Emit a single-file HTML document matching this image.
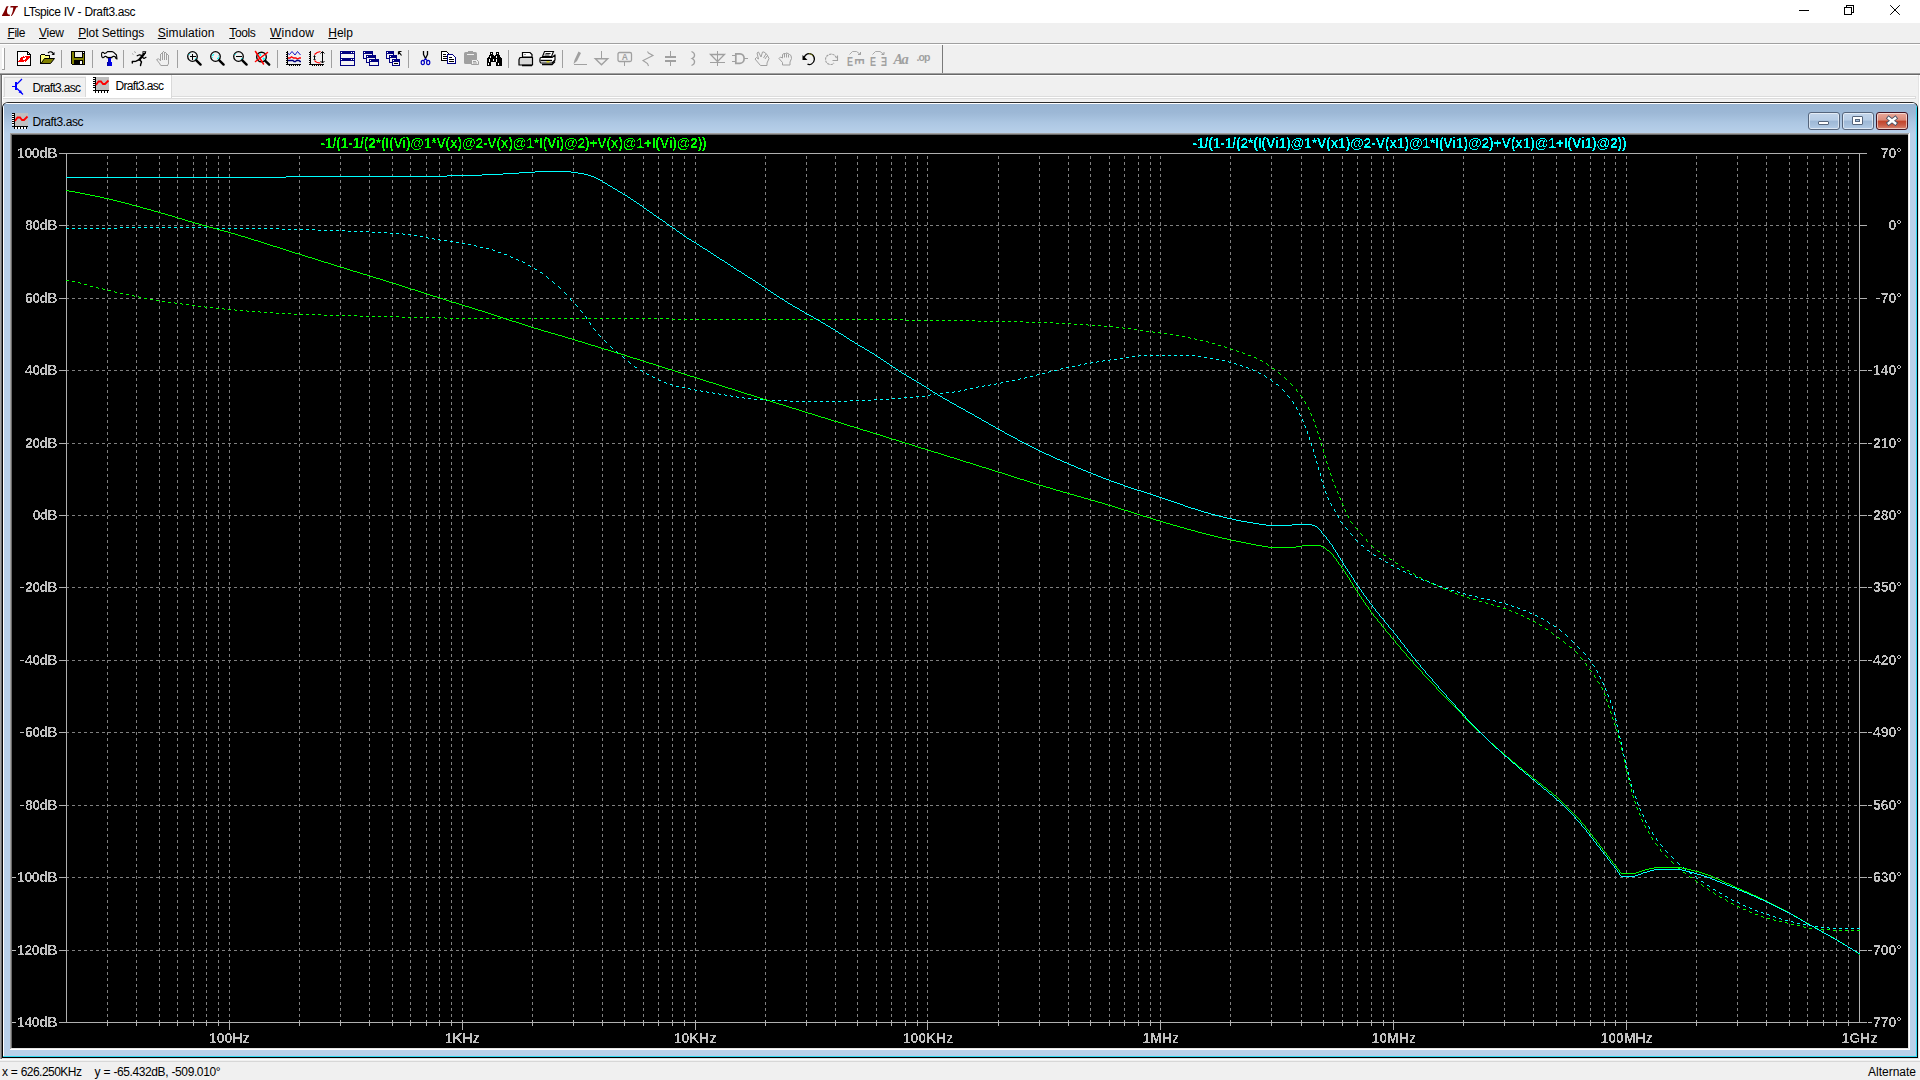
<!DOCTYPE html>
<html lang="en"><head><meta charset="utf-8"><title>LTspice IV - Draft3.asc</title>
<style>
html,body{margin:0;padding:0;width:1920px;height:1080px;overflow:hidden;background:#f0f0f0;}
body{position:relative;font-family:"Liberation Sans",sans-serif;font-size:12px;color:#000;}
.a{position:absolute;}
.t{position:absolute;white-space:pre;}
.t u{text-decoration:underline;text-underline-offset:1px;}
svg{position:absolute;overflow:visible;}
svg text{font-family:"Liberation Sans",sans-serif;font-weight:bold;}
</style></head><body>

<div class="a" style="left:0;top:0;width:1920px;height:23px;background:#fff"></div>
<svg style="left:0;top:0" width="22" height="23" viewBox="0 0 22 23"><path d="M8.600 6L6.300 6.500C5.200 9 4 12.500 2 15.200V16H9.700L10 14.800C8 14.800 7 13.500 7 11.500C7 9.500 7.600 7.600 8.600 6Z" fill="#800000"/><path d="M10.600 6H18L17.600 7.200 16.300 7.500C15 10 14 13.600 11.700 16H10.900C12.400 13 13.100 10 13.300 7.400H10.300Z" fill="#800000"/></svg>
<div class="t" style="left:23.50px;top:4.84px;font-size:12px;line-height:14px;letter-spacing:-0.411px;word-spacing:0.411px;color:#000;">LTspice IV - Draft3.asc</div>
<svg style="left:1780px;top:0" width="140" height="23" viewBox="1780 0 140 23" fill="none" stroke="#000" stroke-width="1" shape-rendering="crispEdges">
<path d="M1799 10.5h10"/>
<path d="M1844.5 7.5h7v7h-7z M1846.5 7.5v-2h7v7h-2"/>
<path d="M1890.200 5.200l9.600 9.600M1899.800 5.200l-9.600 9.600" shape-rendering="auto" stroke-width="1"/>
</svg>
<div class="a" style="left:0;top:23px;width:1920px;height:20px;background:#f0f0f0"></div>
<div class="t" style="left:7.50px;top:25.84px;font-size:12px;line-height:14px;letter-spacing:-0.445px;word-spacing:0.445px;color:#000;"><u>F</u>ile</div>
<div class="t" style="left:39.00px;top:25.84px;font-size:12px;line-height:14px;letter-spacing:-0.264px;word-spacing:0.264px;color:#000;"><u>V</u>iew</div>
<div class="t" style="left:78.20px;top:25.84px;font-size:12px;line-height:14px;letter-spacing:-0.124px;word-spacing:0.124px;color:#000;"><u>P</u>lot Settings</div>
<div class="t" style="left:157.80px;top:25.84px;font-size:12px;line-height:14px;letter-spacing:0.053px;word-spacing:-0.053px;color:#000;"><u>S</u>imulation</div>
<div class="t" style="left:229.30px;top:25.84px;font-size:12px;line-height:14px;letter-spacing:-0.378px;word-spacing:0.378px;color:#000;"><u>T</u>ools</div>
<div class="t" style="left:270.00px;top:25.84px;font-size:12px;line-height:14px;letter-spacing:0.264px;word-spacing:-0.264px;color:#000;"><u>W</u>indow</div>
<div class="t" style="left:328.30px;top:25.84px;font-size:12px;line-height:14px;letter-spacing:-0.060px;word-spacing:0.060px;color:#000;"><u>H</u>elp</div>
<div class="a" style="left:0;top:43px;width:1920px;height:1px;background:#a0a0a0"></div>
<div class="a" style="left:0;top:44px;width:1920px;height:1px;background:#fff"></div>
<div class="a" style="left:0;top:45px;width:1920px;height:28px;background:#f0f0f0"></div>
<div class="a" style="left:2px;top:48px;width:2px;height:21px;background:#fff"></div>
<div class="a" style="left:4px;top:48px;width:1px;height:22px;background:#a0a0a0"></div>
<div class="a" style="left:2px;top:69px;width:3px;height:1px;background:#a0a0a0"></div>
<svg style="left:0;top:45px" width="960" height="28" viewBox="0 45 960 28">
<g transform="translate(16 51)"><path d="M1.5 0.5H11.5L14.5 3.5V14.5H1.5Z" fill="#fff" stroke="#000" shape-rendering="crispEdges"/><path d="M11.5 0.5V3.5H14.5" fill="none" stroke="#000" shape-rendering="crispEdges"/><path d="M7 5h1v1h-1zM9 5h5v1h-5zM5 6h4v1h-4zM10 6h4v1h-4zM4 7h3v1h-3zM10 7h3v1h-3zM3.500 8h3v1h-3zM9 8h3v1h-3zM3 9h8v1h-8zM2 10h6v1h-6zM8.500 10h1v1h-1z" fill="#f00" shape-rendering="crispEdges"/></g>
<g transform="translate(39 51)"><path d="M1.5 12.5V4.5l1-1h3l1 1h4v2" fill="#ffff80" stroke="#000" shape-rendering="crispEdges"/><path d="M2 12.5l3.5-5H15.5l-4 5z" fill="#808000" stroke="#000" stroke-linejoin="round"/><path d="M9 2c2-2 4.500-1.500 5.500 1" fill="none" stroke="#000" stroke-width="1.200"/><path d="M15.5 1v3h-3z" fill="#000"/></g>
<rect x="61" y="50" width="1" height="18" fill="#a0a0a0" shape-rendering="crispEdges"/>
<g transform="translate(70 51)"><path d="M1 0H15V14H2L1 13Z" fill="#000" shape-rendering="crispEdges"/><path d="M2 1h2v12h-2zM13 3h1v10h-1zM4 7h9v1.500h-9z" fill="#808000" shape-rendering="crispEdges"/><rect x="5" y="1" width="7" height="5" fill="#f0f0f0" stroke="#000" stroke-width="1" shape-rendering="crispEdges"/><rect x="5" y="1" width="7" height="5" fill="#f0f0f0" shape-rendering="crispEdges"/><rect x="4" y="9" width="9" height="4" fill="#000" shape-rendering="crispEdges"/><rect x="10" y="10" width="2" height="3" fill="#fff" shape-rendering="crispEdges"/><rect x="13" y="1" width="1" height="1" fill="#fff" shape-rendering="crispEdges"/></g>
<rect x="92" y="50" width="1" height="18" fill="#a0a0a0" shape-rendering="crispEdges"/>
<g transform="translate(101 51)"><defs><linearGradient id="hg" x1="0" y1="0" x2="0" y2="1"><stop offset="0" stop-color="#fff"/><stop offset="0.55" stop-color="#f4f4f4"/><stop offset="1" stop-color="#9a9a9a"/></linearGradient><linearGradient id="hb" x1="0" y1="0" x2="1" y2="0"><stop offset="0" stop-color="#0000a0"/><stop offset="1" stop-color="#0000ff"/></linearGradient></defs><path d="M0.600 3C0.600 1.600 1.600 1.100 2.600 1.600L3.600 2.600 5 2.100 6.500 0.600H11L13 1.600 15.500 4 16 8 15 7.500 14 5.600 12.500 5.200 11 6V6.600H6V6L4.600 5.200 3.600 5.600 2.600 6.600C1.600 7 0.600 6 0.600 4.500Z" fill="url(#hg)" stroke="#000" stroke-width="1.100" stroke-linejoin="round"/><rect x="7" y="7" width="3" height="4" fill="url(#hb)" shape-rendering="crispEdges"/><rect x="6" y="11" width="5" height="4" fill="url(#hb)" shape-rendering="crispEdges"/></g>
<rect x="123" y="50" width="1" height="18" fill="#a0a0a0" shape-rendering="crispEdges"/>
<g transform="translate(131 51)"><path d="M11.500 0.300h3.800l-0.600 2.700h-3.200z" fill="#000"/><rect x="12.400" y="1.100" width="1.200" height="1.100" fill="#fff"/><path d="M13 3L8.500 8.500" stroke="#000" stroke-width="2.300" stroke-linecap="round" fill="none"/><path d="M10.500 4.300L8.500 3.800 6.200 4.800M11.500 6.200L13 7.500 15 6.300" stroke="#000" stroke-width="1.200" fill="none" stroke-linecap="round" stroke-linejoin="round"/><path d="M8.500 8.500L5 10.200 1.300 10.500V12M9 8.800L10.500 11 9.800 13 9.500 14.500" stroke="#000" stroke-width="1.400" fill="none" stroke-linecap="round" stroke-linejoin="round"/><path d="M1 2.500l1.500 1M3 0.500l2 1.200" stroke="#a0a0a0" stroke-width="0.900" fill="none"/></g>
<g transform="translate(155 51)"><path d="M5.500 2.500V9.500M7.500 1V8.500M9.500 1V8.500M11.500 2V8.500M13.500 3.500V12.500M6 2.500h1M8 0.500h1M10 1.500h1M12 3.500h1M5.500 14.500H12.500" fill="none" stroke="#a0a0a0" stroke-width="1" shape-rendering="crispEdges"/><path d="M5.500 9.800L3.500 7.700 1.600 8.600 5 13 5.500 14.500M12.500 14.500L13.500 12.500" fill="none" stroke="#a0a0a0" stroke-width="1" stroke-linejoin="round"/></g>
<rect x="177" y="50" width="1" height="18" fill="#a0a0a0" shape-rendering="crispEdges"/>
<g transform="translate(185 51)"><circle cx="7.5" cy="5.5" r="4.800" fill="#f0f0f0" stroke="#000" stroke-width="1.300"/><path d="M11.300 9.300L15.600 13.600" stroke="#000" stroke-width="2.400" stroke-linecap="round"/><path d="M4.500 5.500h6M7.500 2.500v6" stroke="#000" stroke-width="1.200" shape-rendering="crispEdges"/><path d="M3.700 4l1.300-1.300M10 8.300l1.300-1.300" stroke="#0ff" stroke-width="1"/></g>
<g transform="translate(208 51)"><circle cx="7.5" cy="5.5" r="4.800" fill="#f0f0f0" stroke="#000" stroke-width="1.300"/><path d="M11.300 9.300L15.600 13.600" stroke="#000" stroke-width="2.400" stroke-linecap="round"/><path d="M4.300 4.800l1.700-1.700M9.300 8l1.500-1.500M4.500 6v0.800M10.500 4.500v0.800" stroke="#0ff" stroke-width="1.100"/></g>
<g transform="translate(231 51)"><circle cx="7.5" cy="5.5" r="4.800" fill="#f0f0f0" stroke="#000" stroke-width="1.300"/><path d="M11.300 9.300L15.600 13.600" stroke="#000" stroke-width="2.400" stroke-linecap="round"/><path d="M4.500 5.500h6" stroke="#000" stroke-width="1.200" shape-rendering="crispEdges"/><path d="M3.700 4l1.300-1.300M10 8.300l1.300-1.300" stroke="#0ff" stroke-width="1"/></g>
<g transform="translate(254 51)"><circle cx="7.500" cy="6" r="4.800" fill="#f4f4f4" stroke="#000" stroke-width="1.400"/><path d="M5.500 4.500l1.500-1.200M9 8.500l1.500-1.500" stroke="#0ff" stroke-width="2"/><path d="M11.300 9.800L15.200 13.700" stroke="#000" stroke-width="2.400" stroke-linecap="round"/><path d="M1.500 0.500L9.500 13M13.500 1.500L1.500 10.500" stroke="#f00" stroke-width="1.500" stroke-linecap="round"/></g>
<rect x="277" y="50" width="1" height="18" fill="#a0a0a0" shape-rendering="crispEdges"/>
<g transform="translate(285 51)"><path d="M2.500 0v14M1 13.500h15" stroke="#000" fill="none" shape-rendering="crispEdges"/><path d="M1 1.500h1M1 3.500h1M1 5.500h1M1 7.500h1M1 9.500h1M1 11.500h1M4.500 14v1M6.500 14v1M8.500 14v1M10.500 14v1M12.500 14v1M14.500 14v1" stroke="#000" fill="none" shape-rendering="crispEdges"/><path d="M3 2.500l1.500 1 2.500-3 3 3.500 2.500-3.500 3 3.500" stroke="#0000c0" stroke-width="0.900" fill="none"/><path d="M3 7h2l1.500-1.200 2 1.200h2.500l1.500 1 2-1h1.500" stroke="#f00" stroke-width="1.300" fill="none"/><path d="M3 9.500h5l1 1h1.500l1-1h2.500l1 1h1" stroke="#000080" stroke-width="1.300" fill="none"/></g>
<g transform="translate(308 51)"><path d="M2.500 0v14M1 13.500h15" stroke="#000" fill="none" shape-rendering="crispEdges"/><path d="M1 1.500h1M1 3.500h1M1 5.500h1M1 7.500h1M1 9.500h1M1 11.500h1M4.500 14v1M6.500 14v1M8.500 14v1M10.500 14v1M12.500 14v1M14.500 14v1" stroke="#000" fill="none" shape-rendering="crispEdges"/><path d="M12.500 0.500c-3 0.500-5 2-6 3M6.500 9.500c1 1.500 3 2.500 6 2.500" stroke="#f00" stroke-width="1.200" fill="none"/><path d="M14.500 1v11M12.500 2.500l2-2 2 2M12.500 10l2 2 2-2" stroke="#000" stroke-width="1" fill="none"/><path d="M6.500 5v3.500M5.500 5.500l1-1 1 1M5.500 8l1 1 1-1" stroke="#000" stroke-width="1" fill="none"/></g>
<rect x="331" y="50" width="1" height="18" fill="#a0a0a0" shape-rendering="crispEdges"/>
<g transform="translate(339 51)"><rect x="1.500" y="0.500" width="14" height="14" fill="#f4f4f4" stroke="#000080" shape-rendering="crispEdges"/><rect x="1" y="0" width="15" height="3" fill="#000080" shape-rendering="crispEdges"/><rect x="1" y="7" width="15" height="3" fill="#000080" shape-rendering="crispEdges"/><path d="M2 1.500h1M12 1.500h1M14 1.500h1M2 8.500h1M12 8.500h1M14 8.500h1" stroke="#fff" shape-rendering="crispEdges"/></g>
<g transform="translate(362 51)"><g shape-rendering="crispEdges"><rect x="1.500" y="0.500" width="9" height="7" fill="#f4f4f4" stroke="#000080"/><rect x="1" y="0" width="10" height="3" fill="#000080"/><rect x="4.500" y="4.500" width="9" height="7" fill="#f4f4f4" stroke="#000080"/><rect x="4" y="4" width="10" height="3" fill="#000080"/><rect x="7.500" y="8.500" width="9" height="6" fill="#f4f4f4" stroke="#000080"/><rect x="7" y="8" width="10" height="3" fill="#000080"/><path d="M2 1.500h1M5 5.500h1M8 9.500h1" stroke="#fff"/></g></g>
<g transform="translate(385 51)"><g shape-rendering="crispEdges"><rect x="1.500" y="0.500" width="7" height="7" fill="#f4f4f4" stroke="#000080"/><rect x="1" y="0" width="8" height="3" fill="#000080"/><rect x="4.500" y="4.500" width="7" height="7" fill="#f4f4f4" stroke="#000080"/><rect x="4" y="4" width="8" height="3" fill="#000080"/><rect x="7.500" y="8.500" width="7" height="6" fill="#f4f4f4" stroke="#000080"/><rect x="7" y="8" width="8" height="3" fill="#000080"/><path d="M2 1.500h1M5 5.500h1M8 9.500h1" stroke="#fff"/><path d="M9 12.500h4" stroke="#000"/></g><path d="M13.500 0.500h3M13.500 0.500v3M13.500 0.500l3 4" stroke="#000" stroke-width="1.200" fill="none"/></g>
<rect x="408" y="50" width="1" height="18" fill="#a0a0a0" shape-rendering="crispEdges"/>
<g transform="translate(417 51)"><path d="M6.500 0v3.500l2 4 2-4v-3.500" stroke="#000" stroke-width="1.300" fill="none" stroke-linejoin="round"/><path d="M8.500 7.500l-2 2.500M8.500 7.500l2 2.500" stroke="#0000c0" stroke-width="1.200" fill="none"/><ellipse cx="5.800" cy="11.500" rx="1.600" ry="2.100" fill="none" stroke="#0000c0" stroke-width="1.200"/><ellipse cx="11.200" cy="11.500" rx="1.600" ry="2.100" fill="none" stroke="#0000c0" stroke-width="1.200"/></g>
<g transform="translate(440 51)"><path d="M1.500 0.500H6.500L9.500 3.500V9.500H1.500Z" fill="#fff" stroke="#000" shape-rendering="crispEdges"/><path d="M3 3.500h3M3 5.500h5M3 7.500h5" stroke="#000" shape-rendering="crispEdges"/><path d="M7.500 3.500H12.500L15.500 6.500V12.500H7.500Z" fill="#fff" stroke="#000080" shape-rendering="crispEdges"/><path d="M9 6.500h3M9 8.500h5M9 10.500h5" stroke="#000" shape-rendering="crispEdges"/></g>
<g transform="translate(463 51)"><rect x="1" y="1" width="13" height="12" rx="1.500" fill="#a0a0a0"/><rect x="5" y="0" width="5" height="2" fill="#a0a0a0"/><rect x="4" y="3" width="7" height="1" fill="#f0f0f0"/><path d="M8.500 8.500H13.500L15.500 10.500V13.500H8.500Z" fill="#f0f0f0" stroke="#a0a0a0"/><path d="M10 10.500h3M10 12h4" stroke="#a0a0a0"/></g>
<g transform="translate(487 51)"><g shape-rendering="crispEdges" fill="#000"><rect x="3" y="1" width="3" height="3"/><rect x="9" y="1" width="3" height="3"/><rect x="2" y="4" width="5" height="3"/><rect x="8" y="4" width="5" height="3"/><rect x="1" y="6" width="6" height="9"/><rect x="8" y="6" width="6" height="9"/><rect x="6" y="5" width="3" height="6"/><rect x="14" y="7" width="1" height="8"/><rect x="0" y="7" width="1" height="8"/><rect x="4" y="2" width="1" height="1" fill="#fff"/><rect x="10" y="2" width="1" height="1" fill="#fff"/><rect x="3" y="5" width="1" height="2" fill="#fff"/><rect x="9" y="5" width="1" height="2" fill="#fff"/><rect x="2" y="8" width="1" height="3" fill="#fff"/><rect x="9" y="8" width="1" height="3" fill="#fff"/><rect x="1" y="12" width="1" height="2" fill="#fff"/><rect x="11" y="12" width="1" height="2" fill="#fff"/><rect x="4" y="11" width="5" height="4" fill="#f0f0f0"/><rect x="6" y="8" width="1" height="2" fill="#fff"/></g></g>
<rect x="508" y="50" width="1" height="18" fill="#a0a0a0" shape-rendering="crispEdges"/>
<g transform="translate(517 51)"><path d="M5.500 1.500h7.500l2 2v2.500h-9.500z" fill="#fff" stroke="#000" stroke-width="1.200"/><path d="M7 3l1 1 1-1" stroke="#a0a0a0" fill="none"/><path d="M3 6.500h12.500v7.500h-13.500v-5.500z" fill="#d8d8d8" stroke="#000" stroke-width="1.200" stroke-linejoin="round"/><path d="M5 14.500h10" stroke="#000" stroke-width="1.500"/></g>
<g transform="translate(539 51)"><path d="M5.500 0.500h9l-2 5h-9z" fill="#fff" stroke="#000" stroke-width="1.100"/><path d="M6.500 2.500h5M5.500 4h5" stroke="#000" stroke-width="0.900"/><path d="M2 6.500h11l3-2.500v5l-3 3h-11c-1.500 0-1.500-5.500 0-5.500z" fill="#fff" stroke="#000" stroke-width="1.200" stroke-linejoin="round"/><path d="M1.500 9.500h11.500" stroke="#000" stroke-width="1.400"/><path d="M7.500 10.800h3" stroke="#e8e000" stroke-width="1.200"/><path d="M3 13.500h10l3-3" stroke="#000" stroke-width="1.400" fill="none"/></g>
<rect x="562" y="50" width="1" height="18" fill="#a0a0a0" shape-rendering="crispEdges"/>
<g transform="translate(572 51)"><path d="M2 13.500h13" stroke="#a0a0a0" fill="none" shape-rendering="crispEdges"/><path d="M1.500 13l1-4 4-8.500 2.500 1.500-4 8z" fill="#a0a0a0"/></g>
<g transform="translate(593 51)"><path d="M8.500 0v7.500" stroke="#a0a0a0" fill="none" shape-rendering="crispEdges"/><path d="M2.300 7.800h12.400l-6.200 6z" fill="none" stroke="#a0a0a0" stroke-width="1.400"/></g>
<g transform="translate(617 51)"><rect x="1" y="1.500" width="13.500" height="9" rx="1.500" fill="none" stroke="#a0a0a0" stroke-width="1.300"/><path d="M7.500 10.500v4.500" stroke="#a0a0a0" shape-rendering="crispEdges"/><text x="7.800" y="9.300" font-size="8.500" text-anchor="middle" fill="#a0a0a0" style="font-family:'Liberation Sans',sans-serif;font-weight:bold">A</text></g>
<g transform="translate(640 51)"><path d="M7.500 0.500l1 1.500 4.500 2.500-10 5 4.500 3 1 2.500" fill="none" stroke="#a0a0a0" stroke-width="1.100" stroke-linejoin="miter"/></g>
<g transform="translate(662 51)"><path d="M8.500 0v5M8.500 10v5" stroke="#a0a0a0" fill="none" shape-rendering="crispEdges"/><path d="M3 5h11v2h-11zM3 9h11v2h-11z" fill="#a0a0a0" shape-rendering="crispEdges"/></g>
<g transform="translate(685 51)"><path d="M6.500 0.500c4 1.500 4 5.500 0.500 7c3.500 1.500 3.500 5.500-0.500 7" fill="none" stroke="#a0a0a0" stroke-width="1.300"/></g>
<g transform="translate(708 51)"><path d="M9.500 0v15" stroke="#a0a0a0" fill="none" shape-rendering="crispEdges"/><path d="M2.500 3.500h14l-7 7z" fill="none" stroke="#a0a0a0" stroke-width="1.300"/><path d="M2 11.500h15" stroke="#a0a0a0" fill="none" shape-rendering="crispEdges"/></g>
<g transform="translate(731 51)"><path d="M1 4.500h3.500M1 10.500h3.500M13 7.500h3.500" stroke="#a0a0a0" fill="none" shape-rendering="crispEdges"/><path d="M4.800 2.800h4.200c5.500 0 5.500 9.500 0 9.500h-4.200z" fill="none" stroke="#a0a0a0" stroke-width="1.700"/></g>
<g transform="translate(754 51)"><path d="M6.500 14.500l-5.500-6.500 1.500-1.500 2 1.500-1.500-6 1.500-1 2.500 5 1.500-5 1.500 0 3 2.500 2 4-2 4.500v2.500z" fill="none" stroke="#a0a0a0" stroke-width="1" stroke-linejoin="round"/><path d="M9.500 7l2.500-4M11 8l2-3" stroke="#a0a0a0" fill="none"/></g>
<g transform="translate(777 51)"><path d="M5.500 14v-2.500l-3.500-4 1.500-1.500 2 1v-3.500l1.500-1h1.500l1-0.500 1.500 0.500 1.500 1 1.500 1 0.500 3-1.500 3.500v3z" fill="none" stroke="#a0a0a0" stroke-width="1" stroke-linejoin="round"/><path d="M7.500 3v3.500M9.500 2.500v4M11.500 3.500v3" stroke="#a0a0a0" fill="none"/></g>
<g transform="translate(800 51)"><path d="M4 6.500c1.500-3.500 5-5 8-3c3.500 2.500 3 7.500-0.500 9.500c-1.500 0.800-3 0.800-4 0" fill="none" stroke="#000" stroke-width="1.300"/><path d="M2.500 4v5h5z" fill="#000"/><path d="M9 2.600c1.500 0 3 1 4 2.500" stroke="#808000" stroke-width="0.800" fill="none"/></g>
<g transform="translate(824 51)"><path d="M12.500 7c-1.500-4-6-5-9-2.500c-3 2.500-2.500 7 1 8.500c2 1 4 0.500 5.500-1" fill="none" stroke="#a0a0a0" stroke-width="1.100" stroke-dasharray="2.500 0.800"/><path d="M13.500 4.500v5h-5" fill="none" stroke="#a0a0a0" stroke-width="1.100"/></g>
<g transform="translate(846 51)"><path d="M3.500 3.500l3-3h4l4 3" fill="none" stroke="#a0a0a0" stroke-width="0.900"/><path d="M12 3.500h2.500v-2.500" fill="none" stroke="#a0a0a0"/><text x="1" y="15" font-size="12.500" fill="#a0a0a0" style="font-family:'Liberation Sans',sans-serif;font-weight:bold" textLength="6" lengthAdjust="spacingAndGlyphs">E</text><text transform="translate(8.500 7.600) rotate(90) scale(0.720 1)" x="0" y="0" font-size="12.500" fill="#a0a0a0" style="font-family:'Liberation Sans',sans-serif;font-weight:bold">E</text></g>
<g transform="translate(869 51)"><path d="M3.500 3.500l3-3h4.500l4 3" fill="none" stroke="#a0a0a0" stroke-width="0.900"/><path d="M12.500 3.500h2.500v-2.500" fill="none" stroke="#a0a0a0"/><text x="1" y="15" font-size="12.500" fill="#a0a0a0" style="font-family:'Liberation Sans',sans-serif;font-weight:bold" textLength="6" lengthAdjust="spacingAndGlyphs">E</text><text transform="translate(18 15) scale(-0.720 1)" x="0" y="0" font-size="12.500" fill="#a0a0a0" style="font-family:'Liberation Sans',sans-serif;font-weight:bold">E</text></g>
<text x="893.500" y="64" font-size="14.500" fill="#a0a0a0" style="font-family:'Liberation Serif',serif;font-style:italic;font-weight:bold" letter-spacing="-1.600">Aa</text>
<text x="916.500" y="60.500" font-size="10.500" fill="#a0a0a0" style="font-family:'Liberation Sans',sans-serif;font-weight:bold" letter-spacing="-0.900">.op</text>
<rect x="942" y="45" width="1" height="29" fill="#7a7a7a" shape-rendering="crispEdges"/>
</svg>
<div class="a" style="left:0;top:73px;width:1920px;height:1px;background:#a0a0a0"></div>
<div class="a" style="left:0;top:74px;width:1920px;height:1px;background:#696969"></div>
<div class="a" style="left:2px;top:75px;width:1916px;height:27px;background:#f0f0f0"></div>
<div class="a" style="left:2px;top:75px;width:1916px;height:1px;background:#fff"></div>
<div class="a" style="left:2px;top:75px;width:1px;height:27px;background:#fff"></div>
<div class="a" style="left:3px;top:96px;width:1913px;height:3px;box-sizing:border-box;background:#fff;border:1px solid #dcdcdc;border-left:0"></div>
<div class="a" style="left:4px;top:77px;width:82px;height:20px;box-sizing:border-box;background:#f0f0f0;border:1px solid #d9d9d9;border-bottom:0"></div>
<div class="a" style="left:86px;top:75px;width:86px;height:23px;box-sizing:border-box;background:#fff;border-right:1px solid #d9d9d9"></div>
<svg style="left:11px;top:78px" width="14" height="18" viewBox="0 0 14 18"><path d="M4 4h2v8h-2z" fill="#00f" shape-rendering="crispEdges"/><path d="M1 8.500h4" stroke="#00f" stroke-width="1" shape-rendering="crispEdges"/><path d="M6 6l5-5M6 10.500l6 6" stroke="#00f" stroke-width="1.200" fill="none"/><path d="M11 15.500l-3.500-1 2.500-2.500z" fill="#00f"/></svg>
<div class="t" style="left:32.50px;top:80.84px;font-size:12px;line-height:14px;letter-spacing:-0.687px;word-spacing:0.687px;color:#000;">Draft3.asc</div>
<svg style="left:93px;top:77px" width="16" height="16" viewBox="0 0 16 16" shape-rendering="crispEdges"><rect x="3" y="0" width="13" height="13" fill="#c0c0c0"/><path d="M0 1.5h2M0 3.5h2M0 5.5h2M0 7.5h2M0 9.5h2M0 11.5h2" stroke="#fff" stroke-width="1" fill="none"/><path d="M3 15h2M6 15h2M9 15h2M12 15h2" stroke="#fff" stroke-width="2" fill="none"/><path d="M2.5 0v14M0 13.5h16" stroke="#000" stroke-width="1" fill="none"/><path d="M0 0.5h2M0 2.5h2M0 4.5h2M0 6.5h2M0 8.5h2M0 10.5h2M2.5 14v2M5.5 14v2M8.5 14v2M11.5 14v2M14.5 14v2" stroke="#000" stroke-width="1" fill="none"/><path d="M3 8L5.500 4.500h2.500l2 2.500h2l3.500-3.500" stroke="#f00" stroke-width="1.800" fill="none" shape-rendering="auto"/></svg>
<div class="t" style="left:115.50px;top:78.84px;font-size:12px;line-height:14px;letter-spacing:-0.687px;word-spacing:0.687px;color:#000;">Draft3.asc</div>
<div class="a" style="left:0;top:75px;width:1px;height:985px;background:#a0a0a0"></div>
<div class="a" style="left:1px;top:75px;width:1px;height:984px;background:#696969"></div>
<div class="a" style="left:1918px;top:75px;width:1px;height:984px;background:#e3e3e3"></div>
<div class="a" style="left:1919px;top:75px;width:1px;height:985px;background:#fff"></div>
<div class="a" style="left:2px;top:1058px;width:1916px;height:1px;background:#e3e3e3"></div>
<div class="a" style="left:0;top:1059px;width:1920px;height:1px;background:#fff"></div>
<div class="a" style="left:2px;top:102px;width:1916px;height:956px;box-sizing:border-box;border:1px solid #000;border-top-color:#2b2b2b;border-radius:6px 6px 0 0;background:#b9d1ea;overflow:hidden"><div class="a" style="left:0;top:0;width:1914px;height:31px;background:linear-gradient(#98b4d2 0px,#9db8d6 10px,#adc7e3 20px,#b9d1ea 31px)"></div><div class="a" style="left:0;top:0;width:1914px;height:1px;background:#fff;border-radius:5px 5px 0 0"></div><div class="a" style="left:0;top:0;width:1px;height:954px;background:#fff"></div><div class="a" style="left:1913px;top:2px;width:1px;height:952px;background:#2fd8f0"></div><div class="a" style="left:0;top:953px;width:1914px;height:1px;background:#2fd8f0"></div></div>
<div class="a" style="left:10px;top:133px;width:1900px;height:917px;background:#fff"></div>
<div class="a" style="left:10px;top:133px;width:1899px;height:916px;background:#a0a0a0"></div>
<div class="a" style="left:11px;top:134px;width:1898px;height:915px;background:#e3e3e3"></div>
<div class="a" style="left:11px;top:134px;width:1897px;height:914px;background:#696969"></div>
<div class="a" style="left:12px;top:135px;width:1896px;height:913px;background:#000"></div>
<svg style="left:12px;top:113px" width="16" height="16" viewBox="0 0 16 16" shape-rendering="crispEdges"><rect x="3" y="0" width="13" height="13" fill="#c0c0c0"/><path d="M0 1.5h2M0 3.5h2M0 5.5h2M0 7.5h2M0 9.5h2M0 11.5h2" stroke="#fff" stroke-width="1" fill="none"/><path d="M3 15h2M6 15h2M9 15h2M12 15h2" stroke="#fff" stroke-width="2" fill="none"/><path d="M2.5 0v14M0 13.5h16" stroke="#000" stroke-width="1" fill="none"/><path d="M0 0.5h2M0 2.5h2M0 4.5h2M0 6.5h2M0 8.5h2M0 10.5h2M2.5 14v2M5.5 14v2M8.5 14v2M11.5 14v2M14.5 14v2" stroke="#000" stroke-width="1" fill="none"/><path d="M3 8L5.500 4.500h2.500l2 2.500h2l3.500-3.500" stroke="#f00" stroke-width="1.800" fill="none" shape-rendering="auto"/></svg>
<div class="a" style="left:1808px;top:112px;width:32px;height:18px;box-sizing:border-box;border:1px solid #55657c;border-radius:3px;background:linear-gradient(#c3d5ea 0%,#b7cde6 45%,#9db8d6 50%,#a6c0dc 75%,#b4cde8 100%);box-shadow:inset 0 0 0 1px rgba(255,255,255,.55)"></div>
<div class="a" style="left:1842px;top:112px;width:32px;height:18px;box-sizing:border-box;border:1px solid #55657c;border-radius:3px;background:linear-gradient(#c3d5ea 0%,#b7cde6 45%,#9db8d6 50%,#a6c0dc 75%,#b4cde8 100%);box-shadow:inset 0 0 0 1px rgba(255,255,255,.55)"></div>
<div class="a" style="left:1876px;top:112px;width:32px;height:18px;box-sizing:border-box;border:1px solid #431422;border-radius:3px;background:linear-gradient(#e9a99b 0%,#dc8a79 45%,#c1432a 50%,#c85a45 75%,#d98873 100%);box-shadow:inset 0 0 0 1px rgba(255,255,255,.55)"></div>
<svg style="left:1800px;top:110px" width="112" height="22" viewBox="1800 110 112 22"><rect x="1818.500" y="121.500" width="10" height="3" rx="0.500" fill="#fff" stroke="#55657c" stroke-width="1"/><rect x="1852.500" y="116.500" width="10" height="8" rx="0.500" fill="#fff" stroke="#55657c" stroke-width="1"/><rect x="1855.500" y="119.500" width="4" height="2" fill="#a6c0dc" stroke="#55657c" stroke-width="1"/><path d="M1888.800 118.200l6.400 5M1895.200 118.200l-6.400 5" stroke="#4a5568" stroke-width="4.200" stroke-linecap="square"/><path d="M1888.800 118.200l6.400 5M1895.200 118.200l-6.400 5" stroke="#fff" stroke-width="2.400" stroke-linecap="square"/></svg>
<div class="t" style="left:32.50px;top:115.24px;font-size:12px;line-height:14px;letter-spacing:-0.409px;word-spacing:0.409px;color:#000;">Draft3.asc</div>
<svg style="left:12px;top:135px" width="1896" height="913" viewBox="12 135 1896 913">
<g shape-rendering="crispEdges" fill="none" stroke-width="1">
<path d="M107.5 156V1020 M136.5 156V1020 M159.5 156V1020 M177.5 156V1020 M193.5 156V1020 M206.5 156V1020 M218.5 156V1020 M229.5 156V1020 M299.5 156V1020 M340.5 156V1020 M369.5 156V1020 M392.5 156V1020 M410.5 156V1020 M426.5 156V1020 M439.5 156V1020 M451.5 156V1020 M462.5 156V1020 M532.5 156V1020 M573.5 156V1020 M602.5 156V1020 M624.5 156V1020 M643.5 156V1020 M658.5 156V1020 M672.5 156V1020 M684.5 156V1020 M695.5 156V1020 M765.5 156V1020 M806.5 156V1020 M835.5 156V1020 M857.5 156V1020 M876.5 156V1020 M891.5 156V1020 M905.5 156V1020 M917.5 156V1020 M927.5 156V1020 M998.5 156V1020 M1039.5 156V1020 M1068.5 156V1020 M1090.5 156V1020 M1109.5 156V1020 M1124.5 156V1020 M1138.5 156V1020 M1150.5 156V1020 M1160.5 156V1020 M1230.5 156V1020 M1271.5 156V1020 M1301.5 156V1020 M1323.5 156V1020 M1342.5 156V1020 M1357.5 156V1020 M1371.5 156V1020 M1383.5 156V1020 M1393.5 156V1020 M1463.5 156V1020 M1504.5 156V1020 M1533.5 156V1020 M1556.5 156V1020 M1574.5 156V1020 M1590.5 156V1020 M1604.5 156V1020 M1615.5 156V1020 M1626.5 156V1020 M1696.5 156V1020 M1737.5 156V1020 M1766.5 156V1020 M1789.5 156V1020 M1807.5 156V1020 M1823.5 156V1020 M1836.5 156V1020 M1848.5 156V1020" stroke="#808080" stroke-dasharray="3 3"/>
<path d="M66 225.5H1859 M66 298.5H1859 M66 370.5H1859 M66 443.5H1859 M66 515.5H1859 M66 587.5H1859 M66 660.5H1859 M66 732.5H1859 M66 805.5H1859 M66 877.5H1859 M66 950.5H1859" stroke="#808080" stroke-dasharray="3 3"/>
<path d="M59 153.5H1867 M59 1022.5H1867 M66.5 153.5V1023.0 M1859.5 153.5V1023.0 M59 225.5H66 M1860 225.5H1867 M59 298.5H66 M1860 298.5H1867 M59 370.5H66 M1860 370.5H1867 M59 443.5H66 M1860 443.5H1867 M59 515.5H66 M1860 515.5H1867 M59 587.5H66 M1860 587.5H1867 M59 660.5H66 M1860 660.5H1867 M59 732.5H66 M1860 732.5H1867 M59 805.5H66 M1860 805.5H1867 M59 877.5H66 M1860 877.5H1867 M59 950.5H66 M1860 950.5H1867 M107.5 1020V1026 M136.5 1020V1026 M159.5 1020V1026 M177.5 1020V1026 M193.5 1020V1026 M206.5 1020V1026 M218.5 1020V1026 M229.5 1020V1030 M299.5 1020V1026 M340.5 1020V1026 M369.5 1020V1026 M392.5 1020V1026 M410.5 1020V1026 M426.5 1020V1026 M439.5 1020V1026 M451.5 1020V1026 M462.5 1020V1030 M532.5 1020V1026 M573.5 1020V1026 M602.5 1020V1026 M624.5 1020V1026 M643.5 1020V1026 M658.5 1020V1026 M672.5 1020V1026 M684.5 1020V1026 M695.5 1020V1030 M765.5 1020V1026 M806.5 1020V1026 M835.5 1020V1026 M857.5 1020V1026 M876.5 1020V1026 M891.5 1020V1026 M905.5 1020V1026 M917.5 1020V1026 M927.5 1020V1030 M998.5 1020V1026 M1039.5 1020V1026 M1068.5 1020V1026 M1090.5 1020V1026 M1109.5 1020V1026 M1124.5 1020V1026 M1138.5 1020V1026 M1150.5 1020V1026 M1160.5 1020V1030 M1230.5 1020V1026 M1271.5 1020V1026 M1301.5 1020V1026 M1323.5 1020V1026 M1342.5 1020V1026 M1357.5 1020V1026 M1371.5 1020V1026 M1383.5 1020V1026 M1393.5 1020V1030 M1463.5 1020V1026 M1504.5 1020V1026 M1533.5 1020V1026 M1556.5 1020V1026 M1574.5 1020V1026 M1590.5 1020V1026 M1604.5 1020V1026 M1615.5 1020V1026 M1626.5 1020V1030 M1696.5 1020V1026 M1737.5 1020V1026 M1766.5 1020V1026 M1789.5 1020V1026 M1807.5 1020V1026 M1823.5 1020V1026 M1836.5 1020V1026 M1848.5 1020V1026" stroke="#b0b0b0"/>
<path d="M66 280.5h3M72 281.5h3M78 282.5h2M80 283.5h1M84 284.5h3M90 286.5h3M96 287.5h2M98 288.5h1M102 288.5h1M103 289.5h2M108 290.5h3M114 291.5h1M115 292.5h2M120 293.5h3M126 294.5h3M132 295.5h2M134 296.5h1M138 296.5h1M139 297.5h2M144 298.5h3M150 299.5h3M156 300.5h3M162 301.5h3M168 302.5h3M174 302.5h1M175 303.5h2M180 303.5h2M182 304.5h1M186 304.5h3M192 305.5h3M198 306.5h3M204 306.5h1M205 307.5h2M210 307.5h3M216 308.5h3M222 308.5h2M224 309.5h1M228 309.5h3M234 309.5h1M235 310.5h2M240 310.5h3M246 310.5h1M247 311.5h2M252 311.5h3M258 311.5h2M260 312.5h1M264 312.5h3M270 312.5h3M276 313.5h3M282 313.5h3M288 313.5h3M294 314.5h3M300 314.5h3M306 314.5h3M312 314.5h3M318 314.5h3M324 315.5h3M330 315.5h3M336 315.5h3M342 315.5h3M348 315.5h3M354 315.5h3M360 316.5h3M366 316.5h3M372 316.5h3M378 316.5h3M384 316.5h3M390 316.5h3M396 316.5h3M402 317.5h3M408 317.5h3M414 317.5h3M420 317.5h3M426 317.5h3M432 317.5h3M438 317.5h3M444 317.5h1M445 318.5h2M450 318.5h3M456 318.5h3M462 318.5h3M468 318.5h3M474 318.5h3M480 318.5h3M486 318.5h3M492 318.5h3M498 318.5h3M504 318.5h3M510 318.5h3M516 318.5h3M522 318.5h3M528 318.5h3M534 318.5h3M540 318.5h3M546 318.5h3M552 318.5h3M558 318.5h3M564 318.5h3M570 318.5h3M576 318.5h3M582 318.5h3M588 318.5h3M594 318.5h3M600 318.5h3M606 318.5h3M612 318.5h3M618 318.5h3M624 318.5h3M630 318.5h3M636 318.5h3M642 318.5h3M648 318.5h3M654 318.5h3M660 318.5h3M666 318.5h3M672 319.5h3M678 319.5h3M684 319.5h3M690 319.5h3M696 319.5h3M702 319.5h3M708 319.5h3M714 319.5h3M720 319.5h3M726 319.5h3M732 319.5h3M738 319.5h3M744 319.5h3M750 319.5h3M756 319.5h3M762 319.5h3M768 319.5h3M774 319.5h3M780 319.5h3M786 319.5h3M792 319.5h3M798 319.5h3M804 319.5h3M810 319.5h3M816 319.5h3M822 319.5h3M828 319.5h3M834 319.5h3M840 319.5h3M846 319.5h3M852 319.5h3M858 319.5h3M864 319.5h3M870 319.5h3M876 319.5h3M882 319.5h3M888 319.5h3M894 319.5h3M900 319.5h3M906 320.5h3M912 320.5h3M918 320.5h3M924 320.5h3M930 320.5h3M936 320.5h3M942 320.5h3M948 320.5h3M954 320.5h3M960 320.5h3M966 320.5h3M972 320.5h3M978 321.5h3M984 321.5h3M990 321.5h3M996 321.5h3M1002 321.5h3M1008 321.5h3M1014 321.5h3M1020 321.5h3M1026 322.5h3M1032 322.5h3M1038 322.5h3M1044 322.5h3M1050 322.5h3M1056 323.5h3M1062 323.5h3M1068 323.5h3M1074 324.5h3M1080 324.5h3M1086 324.5h2M1088 325.5h1M1092 325.5h3M1098 325.5h3M1104 326.5h3M1110 326.5h3M1116 327.5h3M1122 327.5h1M1123 328.5h2M1128 328.5h3M1134 329.5h3M1140 330.5h3M1146 331.5h3M1152 331.5h1M1153 332.5h2M1158 332.5h2M1160 333.5h1M1164 333.5h3M1170 334.5h3M1176 335.5h3M1182 336.5h3M1188 337.5h2M1190 338.5h1M1194 338.5h1M1195 339.5h2M1200 340.5h3M1206 341.5h2M1208 342.5h1M1212 343.5h3M1218 345.5h3M1224 346.5h1M1225 347.5h2M1230 348.5h1M1231 349.5h2M1236 350.5h1M1237 351.5h2M1242 352.5h1M1243 353.5h2M1248 355.5h3M1254 357.5h2M1256 358.5h1M1260 360.5h2M1262 361.5h1M1266 363.5h1M1267 364.5h1M1268 365.5h1M1272 368.5h2M1274 369.5h1M1278 372.5h1M1279 373.5h1M1280 374.5h1M1284 377.5h1M1285 378.5h1M1286 379.5h1M1290 383.5h1M1291 384.5h1M1292 385.5h1M1296.5 389v2M1297 391.5h1M1300 395.5h1M1301 396.5h1M1302 397.5h1M1304 401.5h1M1305.5 402v2M1308.5 407v2M1309 409.5h1M1310 413.5h1M1311.5 414v2M1313.5 419v2M1314 421.5h1M1315.5 425v2M1316 427.5h1M1317.5 431v2M1318 433.5h1M1319.5 437v2M1320 439.5h1M1321.5 443v3M1323.5 449v3M1324 455.5h1M1325.5 456v2M1326.5 461v2M1327 463.5h1M1328.5 467v2M1329 469.5h1M1330.5 473v2M1331 475.5h1M1332.5 479v2M1333 481.5h1M1334 485.5h1M1335.5 486v2M1337.5 491v2M1338 493.5h1M1339 497.5h1M1340.5 498v2M1342.5 503v2M1343 505.5h1M1344 509.5h1M1345.5 510v2M1347 515.5h1M1348.5 516v2M1350 521.5h1M1351 522.5h1M1352 523.5h1M1355 527.5h1M1356 528.5h1M1357 529.5h1M1360 533.5h1M1361 534.5h1M1362 535.5h1M1366.5 539v2M1367 541.5h1M1371 545.5h1M1372 546.5h1M1373 547.5h1M1377 550.5h1M1378 551.5h2M1383 554.5h1M1384 555.5h2M1389 558.5h1M1390 559.5h2M1395 562.5h1M1396 563.5h2M1401 566.5h1M1402 567.5h2M1407 570.5h2M1409 571.5h1M1413 573.5h1M1414 574.5h1M1415 575.5h1M1419 577.5h2M1421 578.5h1M1425 580.5h2M1427 581.5h1M1431 583.5h2M1433 584.5h1M1437 585.5h1M1438 586.5h2M1443 588.5h2M1445 589.5h1M1449 590.5h1M1450 591.5h2M1455 593.5h2M1457 594.5h1M1461 595.5h2M1463 596.5h1M1467 597.5h2M1469 598.5h1M1473 599.5h3M1479 601.5h3M1485 602.5h1M1486 603.5h2M1491 604.5h2M1493 605.5h1M1497 606.5h3M1503 608.5h3M1509 610.5h2M1511 611.5h1M1515 612.5h1M1516 613.5h2M1521 615.5h2M1523 616.5h1M1527 618.5h2M1529 619.5h1M1533 621.5h2M1535 622.5h1M1539 624.5h1M1540 625.5h2M1545 628.5h1M1546 629.5h2M1551 632.5h1M1552 633.5h1M1553 634.5h1M1557 637.5h2M1559 638.5h1M1563 641.5h1M1564 642.5h1M1565 643.5h1M1569 646.5h1M1570 647.5h2M1575 651.5h1M1576 652.5h1M1577 653.5h1M1580 657.5h1M1581 658.5h1M1582 659.5h1M1585 663.5h1M1586.5 664v2M1589 669.5h1M1590 670.5h1M1591 671.5h1M1594.5 675v2M1595 677.5h1M1597 681.5h1M1598 682.5h1M1599 683.5h1M1601 687.5h1M1602.5 688v2M1604.5 693v2M1605 695.5h1M1606.5 699v2M1607 701.5h1M1608.5 705v2M1609 707.5h1M1610.5 711v2M1611 713.5h1M1612.5 717v2M1613 719.5h1M1614.5 723v2M1615 725.5h1M1616.5 729v2M1617 731.5h1M1618.5 735v3M1619 741.5h1M1620.5 742v2M1621.5 747v3M1622 753.5h1M1623.5 754v2M1624.5 759v3M1625.5 765v3M1626 771.5h1M1627.5 772v2M1628.5 777v3M1629 783.5h1M1630.5 784v2M1631.5 789v3M1632 795.5h1M1633.5 796v2M1634 801.5h1M1635.5 802v2M1636 807.5h1M1637.5 808v2M1639.5 813v2M1640 815.5h1M1641 819.5h1M1642.5 820v2M1644 825.5h1M1645.5 826v2M1648.5 831v2M1649 833.5h1M1651 837.5h1M1652.5 838v2M1655 843.5h1M1656 844.5h1M1657 845.5h1M1660.5 849v2M1661 851.5h1M1665 855.5h1M1666 856.5h1M1667 857.5h1M1671 861.5h1M1672 862.5h1M1673 863.5h1M1677 867.5h1M1678 868.5h2M1683 872.5h2M1685 873.5h1M1689 876.5h1M1690 877.5h2M1695 880.5h1M1696 881.5h1M1697 882.5h1M1701 884.5h1M1702 885.5h1M1703 886.5h1M1707 888.5h1M1708 889.5h1M1709 890.5h1M1713 892.5h1M1714 893.5h1M1715 894.5h1M1719 896.5h1M1720 897.5h2M1725 899.5h1M1726 900.5h1M1727 901.5h1M1731 903.5h2M1733 904.5h1M1737 906.5h2M1739 907.5h1M1743 909.5h3M1749 911.5h1M1750 912.5h2M1755 914.5h3M1761 916.5h2M1763 917.5h1M1767 918.5h3M1773 919.5h1M1774 920.5h2M1779 921.5h3M1785 922.5h2M1787 923.5h1M1791 924.5h3M1797 925.5h3M1803 926.5h1M1804 927.5h2M1809 928.5h3M1815 928.5h3M1821 929.5h3M1827 929.5h3M1833 930.5h3M1839 930.5h3M1845 930.5h3M1851 930.5h3M1857 930.5h3" stroke="#00ff00"/>
<path d="M66 228.5h3M72 228.5h3M78 228.5h3M84 228.5h3M90 228.5h3M96 228.5h3M102 228.5h3M108 228.5h3M114 228.5h3M120 227.5h3M126 227.5h3M132 227.5h3M138 227.5h3M144 227.5h3M150 227.5h3M156 227.5h3M162 227.5h3M168 227.5h3M174 227.5h3M180 227.5h3M186 227.5h3M192 227.5h3M198 227.5h3M204 227.5h3M210 227.5h3M216 228.5h3M222 228.5h3M228 228.5h3M234 228.5h3M240 228.5h3M246 228.5h3M252 228.5h3M258 228.5h3M264 228.5h3M270 228.5h3M276 228.5h3M282 229.5h3M288 229.5h3M294 229.5h3M300 229.5h3M306 229.5h3M312 229.5h3M318 230.5h3M324 230.5h3M330 230.5h3M336 230.5h3M342 230.5h3M348 231.5h3M354 231.5h3M360 231.5h3M366 231.5h3M372 232.5h3M378 232.5h3M384 232.5h3M390 233.5h3M396 233.5h3M402 233.5h1M403 234.5h2M408 234.5h3M414 235.5h3M420 236.5h3M426 237.5h2M428 238.5h1M432 238.5h2M434 239.5h1M438 239.5h2M440 240.5h1M444 240.5h3M450 241.5h3M456 242.5h3M462 243.5h3M468 244.5h3M474 245.5h2M476 246.5h1M480 247.5h3M486 248.5h3M492 249.5h1M493 250.5h2M498 252.5h3M504 254.5h3M510 256.5h1M511 257.5h2M516 259.5h2M518 260.5h1M522 261.5h1M523 262.5h2M528 265.5h2M530 266.5h1M534 268.5h1M535 269.5h2M540 272.5h2M542 273.5h1M546 276.5h1M547 277.5h1M548 278.5h1M552 281.5h1M553 282.5h1M554 283.5h1M558 286.5h1M559 287.5h1M560 288.5h1M564 292.5h1M565 293.5h1M566 294.5h1M570.5 298v2M571 300.5h1M575 304.5h1M576 305.5h1M577 306.5h1M580 310.5h1M581 311.5h1M582 312.5h1M585 316.5h1M586.5 317v2M589 322.5h1M590.5 323v2M593 328.5h1M594 329.5h1M595 330.5h1M598 334.5h1M599 335.5h1M600 336.5h1M604 340.5h1M605 341.5h1M606 342.5h1M610 346.5h1M611 347.5h1M612 348.5h1M616 351.5h1M617 352.5h1M618 353.5h1M622 356.5h1M623 357.5h1M624 358.5h1M628 361.5h1M629 362.5h1M630 363.5h1M634 366.5h1M635 367.5h2M640 370.5h2M642 371.5h1M646 373.5h1M647 374.5h2M652 376.5h1M653 377.5h2M658 379.5h1M659 380.5h2M664 382.5h2M666 383.5h1M670 384.5h2M672 385.5h1M676 386.5h3M682 387.5h3M688 388.5h2M690 389.5h1M694 389.5h1M695 390.5h2M700 390.5h1M701 391.5h2M706 391.5h1M707 392.5h2M712 392.5h1M713 393.5h2M718 393.5h1M719 394.5h2M724 394.5h1M725 395.5h2M730 395.5h1M731 396.5h2M736 396.5h1M737 397.5h2M742 397.5h2M744 398.5h1M748 398.5h3M754 399.5h3M760 399.5h3M766 400.5h3M772 400.5h3M778 400.5h3M784 400.5h3M790 401.5h3M796 401.5h3M802 401.5h3M808 401.5h3M814 401.5h3M820 401.5h3M826 401.5h3M832 401.5h3M838 401.5h3M844 401.5h3M850 400.5h3M856 400.5h3M862 400.5h3M868 400.5h3M874 399.5h3M880 399.5h3M886 399.5h3M892 398.5h3M898 398.5h3M904 397.5h3M910 397.5h3M916 396.5h3M922 396.5h3M928 395.5h2M930 394.5h1M934 394.5h1M935 393.5h2M940 393.5h3M946 392.5h3M952 392.5h2M954 391.5h1M958 391.5h2M960 390.5h1M964 390.5h1M965 389.5h2M970 388.5h3M976 387.5h2M978 386.5h1M982 386.5h2M984 385.5h1M988 385.5h2M990 384.5h1M994 384.5h2M996 383.5h1M1000 383.5h1M1001 382.5h2M1006 381.5h3M1012 380.5h3M1018 379.5h2M1020 378.5h1M1024 378.5h1M1025 377.5h2M1030 376.5h3M1036 375.5h1M1037 374.5h2M1042 373.5h3M1048 372.5h1M1049 371.5h2M1054 370.5h3M1060 369.5h1M1061 368.5h2M1066 367.5h3M1072 366.5h3M1078 365.5h2M1080 364.5h1M1084 364.5h1M1085 363.5h2M1090 363.5h1M1091 362.5h2M1096 362.5h1M1097 361.5h2M1102 361.5h1M1103 360.5h2M1108 360.5h2M1110 359.5h1M1114 359.5h3M1120 358.5h3M1126 357.5h3M1132 356.5h3M1138 356.5h1M1139 355.5h2M1144 355.5h3M1150 355.5h3M1156 355.5h3M1162 355.5h3M1168 355.5h3M1174 355.5h3M1180 355.5h3M1186 355.5h3M1192 355.5h3M1198 356.5h3M1204 357.5h3M1210 358.5h3M1216 359.5h3M1222 360.5h3M1228 361.5h1M1229 362.5h2M1234 363.5h2M1236 364.5h1M1240 365.5h2M1242 366.5h1M1246 367.5h2M1248 368.5h1M1252 369.5h1M1253 370.5h2M1258 372.5h1M1259 373.5h2M1264 375.5h1M1265 376.5h1M1266 377.5h1M1270 379.5h1M1271 380.5h1M1272 381.5h1M1276 384.5h2M1278 385.5h1M1282 389.5h1M1283 390.5h1M1284 391.5h1M1287 395.5h1M1288 396.5h1M1289 397.5h1M1292 401.5h1M1293.5 402v2M1296.5 407v2M1297 409.5h1M1299.5 413v2M1300 415.5h1M1302.5 419v2M1303 421.5h1M1304 425.5h1M1305.5 426v2M1307.5 431v3M1309.5 437v3M1311.5 443v3M1313.5 449v3M1314 455.5h1M1315.5 456v2M1316.5 461v2M1317 463.5h1M1318.5 467v3M1320.5 473v3M1321.5 479v2M1322 481.5h1M1323.5 485v2M1324 487.5h1M1325.5 491v2M1326 493.5h1M1327 497.5h1M1328.5 498v2M1330 503.5h1M1331.5 504v2M1334.5 509v2M1335 511.5h1M1337 515.5h1M1338.5 516v2M1340 521.5h1M1341 522.5h1M1342 523.5h1M1345 527.5h1M1346 528.5h1M1347 529.5h1M1350 533.5h1M1351 534.5h1M1352 535.5h1M1355 539.5h1M1356 540.5h1M1357 541.5h1M1361 545.5h2M1363 546.5h1M1367 550.5h2M1369 551.5h1M1373 554.5h1M1374 555.5h2M1379 558.5h2M1381 559.5h1M1385 561.5h1M1386 562.5h2M1391 565.5h2M1393 566.5h1M1397 568.5h2M1399 569.5h1M1403 571.5h2M1405 572.5h1M1409 573.5h1M1410 574.5h2M1415 576.5h1M1416 577.5h2M1421 579.5h2M1423 580.5h1M1427 581.5h2M1429 582.5h1M1433 583.5h1M1434 584.5h2M1439 586.5h3M1445 588.5h3M1451 590.5h3M1457 591.5h1M1458 592.5h2M1463 593.5h2M1465 594.5h1M1469 595.5h3M1475 596.5h2M1477 597.5h1M1481 598.5h3M1487 599.5h3M1493 600.5h2M1495 601.5h1M1499 602.5h3M1505 603.5h1M1506 604.5h2M1511 605.5h1M1512 606.5h2M1517 607.5h1M1518 608.5h2M1523 610.5h3M1529 612.5h1M1530 613.5h2M1535 615.5h2M1537 616.5h1M1541 618.5h2M1543 619.5h1M1547 621.5h1M1548 622.5h1M1549 623.5h1M1553 625.5h1M1554 626.5h2M1559 629.5h1M1560 630.5h1M1561 631.5h1M1565 634.5h1M1566 635.5h1M1567 636.5h1M1571 640.5h1M1572 641.5h1M1573 642.5h1M1577 646.5h1M1578 647.5h1M1579 648.5h1M1583 652.5h1M1584 653.5h1M1585 654.5h1M1588 658.5h1M1589 659.5h1M1590 660.5h1M1592 664.5h1M1593 665.5h1M1594 666.5h1M1596 670.5h1M1597.5 671v2M1599 676.5h1M1600.5 677v2M1602 682.5h1M1603.5 683v2M1605.5 688v2M1606 690.5h1M1607 694.5h1M1608.5 695v2M1610.5 700v3M1612.5 706v3M1614.5 712v3M1615.5 718v2M1616 720.5h1M1616 724.5h1M1617.5 725v2M1618.5 730v3M1619.5 736v2M1620 738.5h1M1621.5 742v3M1622.5 748v3M1623.5 754v2M1624 756.5h1M1625.5 760v3M1626.5 766v2M1627 768.5h1M1628.5 772v3M1629.5 778v2M1630 780.5h1M1631.5 784v3M1633.5 790v3M1635.5 796v2M1636 798.5h1M1637.5 802v2M1638 804.5h1M1639 808.5h1M1640.5 809v2M1642 814.5h1M1643.5 815v2M1645.5 820v2M1646 822.5h1M1648 826.5h1M1649.5 827v2M1652.5 832v2M1653 834.5h1M1656.5 838v2M1657 840.5h1M1660 844.5h1M1661 845.5h1M1662 846.5h1M1665 850.5h1M1666 851.5h1M1667 852.5h1M1671 856.5h1M1672 857.5h1M1673 858.5h1M1677 862.5h1M1678 863.5h1M1679 864.5h1M1683 867.5h1M1684 868.5h1M1685 869.5h1M1689 872.5h1M1690 873.5h2M1695 876.5h1M1696 877.5h1M1697 878.5h1M1701 881.5h2M1703 882.5h1M1707 885.5h2M1709 886.5h1M1713 889.5h2M1715 890.5h1M1719 892.5h1M1720 893.5h2M1725 896.5h2M1727 897.5h1M1731 899.5h1M1732 900.5h2M1737 902.5h2M1739 903.5h1M1743 905.5h2M1745 906.5h1M1749 907.5h1M1750 908.5h2M1755 910.5h2M1757 911.5h1M1761 912.5h2M1763 913.5h1M1767 914.5h2M1769 915.5h1M1773 916.5h2M1775 917.5h1M1779 918.5h2M1781 919.5h1M1785 920.5h3M1791 921.5h2M1793 922.5h1M1797 923.5h3M1803 924.5h3M1809 925.5h3M1815 926.5h3M1821 927.5h3M1827 927.5h2M1829 928.5h1M1833 928.5h3M1839 928.5h3M1845 928.5h3M1851 928.5h3M1857 928.5h3" stroke="#00ffff"/>
<path d="M66 190.5h3M69 191.5h6M75 192.5h5M80 193.5h5M85 194.5h5M90 195.5h5M95 196.5h5M100 197.5h4M104 198.5h5M109 199.5h4M113 200.5h4M117 201.5h4M121 202.5h4M125 203.5h4M129 204.5h3M132 205.5h4M136 206.5h4M140 207.5h3M143 208.5h4M147 209.5h4M151 210.5h3M154 211.5h4M158 212.5h3M161 213.5h4M165 214.5h3M168 215.5h4M172 216.5h3M175 217.5h3M178 218.5h4M182 219.5h3M185 220.5h3M188 221.5h4M192 222.5h3M195 223.5h4M199 224.5h3M202 225.5h4M206 226.5h3M209 227.5h4M213 228.5h4M217 229.5h3M220 230.5h4M224 231.5h4M228 232.5h3M231 233.5h4M235 234.5h3M238 235.5h3M241 236.5h4M245 237.5h3M248 238.5h3M251 239.5h3M254 240.5h4M258 241.5h3M261 242.5h3M264 243.5h3M267 244.5h3M270 245.5h3M273 246.5h4M277 247.5h3M280 248.5h3M283 249.5h3M286 250.5h3M289 251.5h3M292 252.5h3M295 253.5h4M299 254.5h3M302 255.5h3M305 256.5h3M308 257.5h4M312 258.5h3M315 259.5h3M318 260.5h3M321 261.5h3M324 262.5h4M328 263.5h3M331 264.5h3M334 265.5h3M337 266.5h3M340 267.5h4M344 268.5h3M347 269.5h3M350 270.5h3M353 271.5h4M357 272.5h3M360 273.5h3M363 274.5h4M367 275.5h3M370 276.5h3M373 277.5h3M376 278.5h4M380 279.5h3M383 280.5h3M386 281.5h3M389 282.5h3M392 283.5h4M396 284.5h3M399 285.5h3M402 286.5h3M405 287.5h3M408 288.5h3M411 289.5h4M415 290.5h3M418 291.5h3M421 292.5h3M424 293.5h3M427 294.5h3M430 295.5h3M433 296.5h4M437 297.5h3M440 298.5h3M443 299.5h3M446 300.5h3M449 301.5h3M452 302.5h4M456 303.5h3M459 304.5h3M462 305.5h3M465 306.5h4M469 307.5h3M472 308.5h3M475 309.5h3M478 310.5h4M482 311.5h3M485 312.5h3M488 313.5h3M491 314.5h3M494 315.5h3M497 316.5h3M500 317.5h3M503 318.5h3M506 319.5h3M509 320.5h3M512 321.5h4M516 322.5h3M519 323.5h3M522 324.5h3M525 325.5h3M528 326.5h3M531 327.5h3M534 328.5h4M538 329.5h3M541 330.5h3M544 331.5h4M548 332.5h3M551 333.5h4M555 334.5h3M558 335.5h4M562 336.5h3M565 337.5h3M568 338.5h4M572 339.5h3M575 340.5h3M578 341.5h4M582 342.5h3M585 343.5h3M588 344.5h3M591 345.5h4M595 346.5h3M598 347.5h3M601 348.5h3M604 349.5h4M608 350.5h3M611 351.5h3M614 352.5h3M617 353.5h4M621 354.5h3M624 355.5h3M627 356.5h3M630 357.5h3M633 358.5h4M637 359.5h3M640 360.5h3M643 361.5h3M646 362.5h3M649 363.5h4M653 364.5h3M656 365.5h3M659 366.5h3M662 367.5h3M665 368.5h3M668 369.5h4M672 370.5h3M675 371.5h3M678 372.5h3M681 373.5h3M684 374.5h3M687 375.5h3M690 376.5h4M694 377.5h3M697 378.5h3M700 379.5h3M703 380.5h3M706 381.5h3M709 382.5h4M713 383.5h3M716 384.5h3M719 385.5h3M722 386.5h3M725 387.5h3M728 388.5h4M732 389.5h3M735 390.5h3M738 391.5h3M741 392.5h3M744 393.5h3M747 394.5h4M751 395.5h3M754 396.5h3M757 397.5h3M760 398.5h3M763 399.5h4M767 400.5h3M770 401.5h3M773 402.5h3M776 403.5h3M779 404.5h4M783 405.5h3M786 406.5h3M789 407.5h3M792 408.5h4M796 409.5h3M799 410.5h3M802 411.5h3M805 412.5h3M808 413.5h4M812 414.5h3M815 415.5h3M818 416.5h3M821 417.5h4M825 418.5h3M828 419.5h3M831 420.5h3M834 421.5h4M838 422.5h3M841 423.5h3M844 424.5h3M847 425.5h3M850 426.5h4M854 427.5h3M857 428.5h3M860 429.5h3M863 430.5h4M867 431.5h3M870 432.5h3M873 433.5h3M876 434.5h4M880 435.5h3M883 436.5h3M886 437.5h3M889 438.5h3M892 439.5h4M896 440.5h3M899 441.5h3M902 442.5h3M905 443.5h4M909 444.5h3M912 445.5h3M915 446.5h3M918 447.5h3M921 448.5h4M925 449.5h3M928 450.5h3M931 451.5h3M934 452.5h4M938 453.5h3M941 454.5h3M944 455.5h3M947 456.5h3M950 457.5h4M954 458.5h3M957 459.5h3M960 460.5h3M963 461.5h3M966 462.5h4M970 463.5h3M973 464.5h3M976 465.5h3M979 466.5h3M982 467.5h4M986 468.5h3M989 469.5h3M992 470.5h3M995 471.5h3M998 472.5h4M1002 473.5h3M1005 474.5h3M1008 475.5h3M1011 476.5h3M1014 477.5h3M1017 478.5h3M1020 479.5h4M1024 480.5h3M1027 481.5h3M1030 482.5h3M1033 483.5h3M1036 484.5h3M1039 485.5h4M1043 486.5h3M1046 487.5h4M1050 488.5h3M1053 489.5h3M1056 490.5h4M1060 491.5h3M1063 492.5h4M1067 493.5h3M1070 494.5h4M1074 495.5h3M1077 496.5h4M1081 497.5h3M1084 498.5h4M1088 499.5h3M1091 500.5h4M1095 501.5h3M1098 502.5h4M1102 503.5h3M1105 504.5h3M1108 505.5h4M1112 506.5h3M1115 507.5h3M1118 508.5h3M1121 509.5h3M1124 510.5h4M1128 511.5h3M1131 512.5h3M1134 513.5h3M1137 514.5h3M1140 515.5h3M1143 516.5h4M1147 517.5h3M1150 518.5h3M1153 519.5h3M1156 520.5h4M1160 521.5h3M1163 522.5h3M1166 523.5h4M1170 524.5h3M1173 525.5h4M1177 526.5h3M1180 527.5h4M1184 528.5h3M1187 529.5h4M1191 530.5h4M1195 531.5h3M1198 532.5h4M1202 533.5h4M1206 534.5h4M1210 535.5h4M1214 536.5h4M1218 537.5h4M1222 538.5h5M1227 539.5h4M1231 540.5h5M1236 541.5h5M1241 542.5h5M1246 543.5h5M1251 544.5h5M1256 545.5h6M1262 546.5h6M1268 547.5h28M1296 546.5h6M1302 545.5h19M1321 546.5h2M1323 547.5h2M1325 548.5h1M1326 549.5h1M1327 550.5h2M1329 551.5h1M1330 552.5h1M1331 553.5h1M1332 554.5h1M1333.5 555v2M1334 557.5h1M1335 558.5h1M1336.5 559v2M1337 561.5h1M1338.5 562v2M1339 564.5h1M1340 565.5h1M1341.5 566v2M1342 568.5h1M1343.5 569v2M1344 571.5h1M1345.5 572v2M1346 574.5h1M1347.5 575v2M1348 577.5h1M1349.5 578v2M1350.5 580v2M1351 582.5h1M1352.5 583v2M1353.5 585v2M1354 587.5h1M1355.5 588v2M1356 590.5h1M1357.5 591v2M1358 593.5h1M1359.5 594v2M1360 596.5h1M1361.5 597v2M1362 599.5h1M1363.5 600v2M1364 602.5h1M1365.5 603v2M1366 605.5h1M1367 606.5h1M1368.5 607v2M1369 609.5h1M1370.5 610v2M1371 612.5h1M1372 613.5h1M1373.5 614v2M1374 616.5h1M1375 617.5h1M1376 618.5h1M1377.5 619v2M1378 621.5h1M1379 622.5h1M1380 623.5h1M1381.5 624v2M1382 626.5h1M1383 627.5h1M1384 628.5h1M1385.5 629v2M1386 631.5h1M1387 632.5h1M1388 633.5h1M1389 634.5h1M1390.5 635v2M1391 637.5h1M1392 638.5h1M1393 639.5h1M1394 640.5h1M1395.5 641v2M1396 643.5h1M1397 644.5h1M1398 645.5h1M1399 646.5h1M1400.5 647v2M1401 649.5h1M1402 650.5h1M1403 651.5h1M1404 652.5h1M1405 653.5h1M1406.5 654v2M1407 656.5h1M1408 657.5h1M1409 658.5h1M1410 659.5h1M1411 660.5h1M1412 661.5h1M1413.5 662v2M1414 664.5h1M1415 665.5h1M1416 666.5h1M1417 667.5h1M1418 668.5h1M1419 669.5h1M1420 670.5h1M1421 671.5h1M1422.5 672v2M1423 674.5h1M1424 675.5h1M1425 676.5h1M1426 677.5h1M1427 678.5h1M1428 679.5h1M1429 680.5h1M1430 681.5h1M1431 682.5h1M1432 683.5h1M1433 684.5h1M1434 685.5h1M1435 686.5h1M1436.5 687v2M1437 689.5h1M1438 690.5h1M1439 691.5h1M1440 692.5h1M1441 693.5h1M1442 694.5h1M1443 695.5h1M1444 696.5h1M1445 697.5h1M1446 698.5h1M1447 699.5h1M1448 700.5h1M1449 701.5h1M1450 702.5h1M1451 703.5h1M1452 704.5h1M1453 705.5h1M1454 706.5h1M1455 707.5h1M1456 708.5h1M1457 709.5h1M1458 710.5h1M1459 711.5h1M1460 712.5h1M1461 713.5h1M1462.5 714v2M1463 716.5h1M1464 717.5h1M1465 718.5h1M1466 719.5h1M1467 720.5h1M1468 721.5h1M1469 722.5h1M1470 723.5h1M1471 724.5h1M1472 725.5h1M1473 726.5h1M1474 727.5h1M1475 728.5h1M1476 729.5h1M1477 730.5h1M1478 731.5h1M1479 732.5h2M1481 733.5h1M1482 734.5h1M1483 735.5h1M1484 736.5h1M1485 737.5h1M1486 738.5h1M1487 739.5h1M1488 740.5h1M1489 741.5h1M1490 742.5h1M1491 743.5h2M1493 744.5h1M1494 745.5h1M1495 746.5h1M1496 747.5h1M1497 748.5h1M1498 749.5h1M1499 750.5h1M1500 751.5h2M1502 752.5h1M1503 753.5h1M1504 754.5h1M1505 755.5h1M1506 756.5h1M1507 757.5h2M1509 758.5h1M1510 759.5h1M1511 760.5h1M1512 761.5h1M1513 762.5h2M1515 763.5h1M1516 764.5h1M1517 765.5h1M1518 766.5h1M1519 767.5h2M1521 768.5h1M1522 769.5h1M1523 770.5h1M1524 771.5h2M1526 772.5h1M1527 773.5h1M1528 774.5h1M1529 775.5h2M1531 776.5h1M1532 777.5h1M1533 778.5h1M1534 779.5h2M1536 780.5h1M1537 781.5h1M1538 782.5h1M1539 783.5h2M1541 784.5h1M1542 785.5h1M1543 786.5h1M1544 787.5h2M1546 788.5h1M1547 789.5h1M1548 790.5h1M1549 791.5h2M1551 792.5h1M1552 793.5h1M1553 794.5h1M1554 795.5h2M1556 796.5h1M1557 797.5h1M1558 798.5h1M1559 799.5h1M1560 800.5h1M1561 801.5h1M1562 802.5h1M1563 803.5h1M1564 804.5h1M1565 805.5h1M1566 806.5h1M1567 807.5h1M1568 808.5h1M1569 809.5h1M1570 810.5h1M1571 811.5h1M1572 812.5h1M1573 813.5h1M1574 814.5h1M1575 815.5h1M1576 816.5h1M1577 817.5h1M1578 818.5h1M1579 819.5h1M1580.5 820v2M1581 822.5h1M1582 823.5h1M1583 824.5h1M1584 825.5h1M1585.5 826v2M1586 828.5h1M1587 829.5h1M1588 830.5h1M1589.5 831v2M1590 833.5h1M1591 834.5h1M1592.5 835v2M1593 837.5h1M1594 838.5h1M1595 839.5h1M1596.5 840v2M1597 842.5h1M1598 843.5h1M1599.5 844v2M1600 846.5h1M1601 847.5h1M1602.5 848v2M1603 850.5h1M1604 851.5h1M1605 852.5h1M1606.5 853v2M1607 855.5h1M1608 856.5h1M1609.5 857v2M1610 859.5h1M1611 860.5h1M1612.5 861v2M1613 863.5h1M1614 864.5h1M1615 865.5h1M1616.5 866v2M1617 868.5h1M1618 869.5h1M1619.5 870v2M1620 872.5h1M1621 873.5h15M1636 872.5h3M1639 871.5h3M1642 870.5h3M1645 869.5h4M1649 868.5h5M1654 867.5h28M1682 868.5h5M1687 869.5h4M1691 870.5h4M1695 871.5h4M1699 872.5h3M1702 873.5h3M1705 874.5h3M1708 875.5h3M1711 876.5h2M1713 877.5h2M1715 878.5h3M1718 879.5h2M1720 880.5h2M1722 881.5h2M1724 882.5h2M1726 883.5h3M1729 884.5h2M1731 885.5h2M1733 886.5h2M1735 887.5h2M1737 888.5h3M1740 889.5h2M1742 890.5h2M1744 891.5h3M1747 892.5h2M1749 893.5h2M1751 894.5h2M1753 895.5h3M1756 896.5h2M1758 897.5h2M1760 898.5h2M1762 899.5h2M1764 900.5h2M1766 901.5h2M1768 902.5h2M1770 903.5h2M1772 904.5h2M1774 905.5h2M1776 906.5h2M1778 907.5h2M1780 908.5h2M1782 909.5h2M1784 910.5h2M1786 911.5h2M1788 912.5h1M1789 913.5h2M1791 914.5h2M1793 915.5h2M1795 916.5h2M1797 917.5h1M1798 918.5h2M1800 919.5h2M1802 920.5h1M1803 921.5h2M1805 922.5h2M1807 923.5h2M1809 924.5h1M1810 925.5h2M1812 926.5h2M1814 927.5h2M1816 928.5h1M1817 929.5h2M1819 930.5h2M1821 931.5h2M1823 932.5h1M1824 933.5h2M1826 934.5h2M1828 935.5h2M1830 936.5h2M1832 937.5h2M1834 938.5h1M1835 939.5h2M1837 940.5h2M1839 941.5h1M1840 942.5h2M1842 943.5h2M1844 944.5h1M1845 945.5h2M1847 946.5h1M1848 947.5h2M1850 948.5h2M1852 949.5h1M1853 950.5h2M1855 951.5h1M1856 952.5h2M1858 953.5h1M1859 954.5h1" stroke="#00ff00"/>
<path d="M66 177.5h220M286 176.5h161M447 175.5h35M482 174.5h21M503 173.5h16M519 172.5h16M535 171.5h36M571 172.5h7M578 173.5h6M584 174.5h4M588 175.5h3M591 176.5h3M594 177.5h2M596 178.5h2M598 179.5h2M600 180.5h2M602 181.5h1M603 182.5h2M605 183.5h2M607 184.5h1M608 185.5h2M610 186.5h2M612 187.5h1M613 188.5h2M615 189.5h2M617 190.5h1M618 191.5h2M620 192.5h2M622 193.5h1M623 194.5h2M625 195.5h2M627 196.5h1M628 197.5h2M630 198.5h1M631 199.5h2M633 200.5h1M634 201.5h2M636 202.5h1M637 203.5h2M639 204.5h1M640 205.5h2M642 206.5h1M643 207.5h1M644 208.5h2M646 209.5h1M647 210.5h2M649 211.5h1M650 212.5h2M652 213.5h1M653 214.5h1M654 215.5h2M656 216.5h1M657 217.5h2M659 218.5h1M660 219.5h2M662 220.5h1M663 221.5h2M665 222.5h1M666 223.5h1M667 224.5h2M669 225.5h1M670 226.5h2M672 227.5h1M673 228.5h2M675 229.5h1M676 230.5h1M677 231.5h2M679 232.5h1M680 233.5h2M682 234.5h1M683 235.5h1M684 236.5h2M686 237.5h1M687 238.5h2M689 239.5h2M691 240.5h1M692 241.5h2M694 242.5h2M696 243.5h1M697 244.5h2M699 245.5h1M700 246.5h2M702 247.5h1M703 248.5h2M705 249.5h2M707 250.5h1M708 251.5h2M710 252.5h1M711 253.5h2M713 254.5h1M714 255.5h2M716 256.5h1M717 257.5h2M719 258.5h1M720 259.5h2M722 260.5h2M724 261.5h1M725 262.5h2M727 263.5h1M728 264.5h2M730 265.5h1M731 266.5h2M733 267.5h1M734 268.5h2M736 269.5h1M737 270.5h2M739 271.5h2M741 272.5h1M742 273.5h2M744 274.5h1M745 275.5h2M747 276.5h1M748 277.5h2M750 278.5h2M752 279.5h1M753 280.5h2M755 281.5h1M756 282.5h2M758 283.5h1M759 284.5h2M761 285.5h1M762 286.5h2M764 287.5h1M765 288.5h2M767 289.5h1M768 290.5h2M770 291.5h1M771 292.5h2M773 293.5h1M774 294.5h2M776 295.5h1M777 296.5h2M779 297.5h1M780 298.5h2M782 299.5h2M784 300.5h1M785 301.5h2M787 302.5h1M788 303.5h2M790 304.5h2M792 305.5h1M793 306.5h2M795 307.5h2M797 308.5h2M799 309.5h1M800 310.5h2M802 311.5h2M804 312.5h1M805 313.5h2M807 314.5h2M809 315.5h2M811 316.5h2M813 317.5h1M814 318.5h2M816 319.5h2M818 320.5h2M820 321.5h1M821 322.5h2M823 323.5h2M825 324.5h1M826 325.5h2M828 326.5h2M830 327.5h1M831 328.5h2M833 329.5h2M835 330.5h1M836 331.5h2M838 332.5h1M839 333.5h2M841 334.5h2M843 335.5h1M844 336.5h2M846 337.5h1M847 338.5h2M849 339.5h1M850 340.5h2M852 341.5h2M854 342.5h1M855 343.5h2M857 344.5h1M858 345.5h2M860 346.5h2M862 347.5h2M864 348.5h1M865 349.5h2M867 350.5h2M869 351.5h1M870 352.5h2M872 353.5h2M874 354.5h1M875 355.5h2M877 356.5h1M878 357.5h2M880 358.5h1M881 359.5h2M883 360.5h1M884 361.5h2M886 362.5h1M887 363.5h2M889 364.5h1M890 365.5h2M892 366.5h1M893 367.5h2M895 368.5h1M896 369.5h2M898 370.5h1M899 371.5h2M901 372.5h1M902 373.5h2M904 374.5h2M906 375.5h1M907 376.5h2M909 377.5h2M911 378.5h1M912 379.5h2M914 380.5h2M916 381.5h1M917 382.5h2M919 383.5h2M921 384.5h1M922 385.5h2M924 386.5h2M926 387.5h1M927 388.5h2M929 389.5h1M930 390.5h2M932 391.5h1M933 392.5h2M935 393.5h2M937 394.5h1M938 395.5h2M940 396.5h2M942 397.5h1M943 398.5h2M945 399.5h2M947 400.5h2M949 401.5h1M950 402.5h2M952 403.5h2M954 404.5h2M956 405.5h1M957 406.5h2M959 407.5h2M961 408.5h2M963 409.5h2M965 410.5h1M966 411.5h2M968 412.5h2M970 413.5h2M972 414.5h2M974 415.5h1M975 416.5h2M977 417.5h2M979 418.5h2M981 419.5h1M982 420.5h2M984 421.5h2M986 422.5h2M988 423.5h1M989 424.5h2M991 425.5h2M993 426.5h2M995 427.5h1M996 428.5h2M998 429.5h2M1000 430.5h2M1002 431.5h2M1004 432.5h1M1005 433.5h2M1007 434.5h2M1009 435.5h2M1011 436.5h2M1013 437.5h2M1015 438.5h2M1017 439.5h1M1018 440.5h2M1020 441.5h2M1022 442.5h2M1024 443.5h2M1026 444.5h2M1028 445.5h2M1030 446.5h2M1032 447.5h2M1034 448.5h2M1036 449.5h2M1038 450.5h2M1040 451.5h2M1042 452.5h2M1044 453.5h2M1046 454.5h3M1049 455.5h2M1051 456.5h2M1053 457.5h2M1055 458.5h2M1057 459.5h3M1060 460.5h2M1062 461.5h2M1064 462.5h3M1067 463.5h2M1069 464.5h2M1071 465.5h3M1074 466.5h2M1076 467.5h2M1078 468.5h3M1081 469.5h2M1083 470.5h3M1086 471.5h2M1088 472.5h3M1091 473.5h2M1093 474.5h3M1096 475.5h2M1098 476.5h3M1101 477.5h2M1103 478.5h3M1106 479.5h3M1109 480.5h2M1111 481.5h3M1114 482.5h3M1117 483.5h3M1120 484.5h3M1123 485.5h2M1125 486.5h3M1128 487.5h3M1131 488.5h3M1134 489.5h3M1137 490.5h4M1141 491.5h3M1144 492.5h3M1147 493.5h3M1150 494.5h3M1153 495.5h3M1156 496.5h3M1159 497.5h3M1162 498.5h3M1165 499.5h3M1168 500.5h3M1171 501.5h3M1174 502.5h3M1177 503.5h3M1180 504.5h3M1183 505.5h2M1185 506.5h3M1188 507.5h3M1191 508.5h4M1195 509.5h3M1198 510.5h3M1201 511.5h3M1204 512.5h4M1208 513.5h3M1211 514.5h4M1215 515.5h4M1219 516.5h4M1223 517.5h4M1227 518.5h5M1232 519.5h4M1236 520.5h5M1241 521.5h6M1247 522.5h6M1253 523.5h6M1259 524.5h7M1266 525.5h26M1292 524.5h20M1312 525.5h3M1315 526.5h2M1317 527.5h1M1318 528.5h1M1319 529.5h1M1320 530.5h1M1321.5 531v2M1322 533.5h1M1323 534.5h1M1324 535.5h1M1325 536.5h1M1326.5 537v2M1327 539.5h1M1328 540.5h1M1329.5 541v2M1330 543.5h1M1331 544.5h1M1332.5 545v2M1333.5 547v2M1334 549.5h1M1335.5 550v2M1336 552.5h1M1337.5 553v2M1338.5 555v2M1339 557.5h1M1340.5 558v2M1341 560.5h1M1342.5 561v2M1343.5 563v2M1344 565.5h1M1345.5 566v2M1346 568.5h1M1347.5 569v2M1348 571.5h1M1349.5 572v2M1350 574.5h1M1351.5 575v2M1352 577.5h1M1353.5 578v2M1354.5 580v2M1355 582.5h1M1356.5 583v2M1357 585.5h1M1358 586.5h1M1359.5 587v2M1360 589.5h1M1361.5 590v2M1362 592.5h1M1363.5 593v2M1364 595.5h1M1365 596.5h1M1366.5 597v2M1367 599.5h1M1368 600.5h1M1369.5 601v2M1370 603.5h1M1371 604.5h1M1372.5 605v2M1373 607.5h1M1374 608.5h1M1375.5 609v2M1376 611.5h1M1377 612.5h1M1378 613.5h1M1379.5 614v2M1380 616.5h1M1381 617.5h1M1382 618.5h1M1383 619.5h1M1384.5 620v2M1385 622.5h1M1386 623.5h1M1387 624.5h1M1388.5 625v2M1389 627.5h1M1390 628.5h1M1391 629.5h1M1392 630.5h1M1393.5 631v2M1394 633.5h1M1395 634.5h1M1396 635.5h1M1397.5 636v2M1398 638.5h1M1399 639.5h1M1400.5 640v2M1401 642.5h1M1402 643.5h1M1403 644.5h1M1404.5 645v2M1405 647.5h1M1406 648.5h1M1407.5 649v2M1408 651.5h1M1409 652.5h1M1410 653.5h1M1411.5 654v2M1412 656.5h1M1413 657.5h1M1414 658.5h1M1415.5 659v2M1416 661.5h1M1417 662.5h1M1418 663.5h1M1419 664.5h1M1420.5 665v2M1421 667.5h1M1422 668.5h1M1423 669.5h1M1424 670.5h1M1425.5 671v2M1426 673.5h1M1427 674.5h1M1428 675.5h1M1429 676.5h1M1430 677.5h1M1431 678.5h1M1432.5 679v2M1433 681.5h1M1434 682.5h1M1435 683.5h1M1436 684.5h1M1437 685.5h1M1438.5 686v2M1439 688.5h1M1440 689.5h1M1441 690.5h1M1442 691.5h1M1443 692.5h1M1444 693.5h1M1445 694.5h1M1446.5 695v2M1447 697.5h1M1448 698.5h1M1449 699.5h1M1450 700.5h1M1451 701.5h1M1452 702.5h1M1453 703.5h1M1454 704.5h1M1455.5 705v2M1456 707.5h1M1457 708.5h1M1458 709.5h1M1459 710.5h1M1460 711.5h1M1461 712.5h1M1462 713.5h1M1463 714.5h1M1464 715.5h1M1465.5 716v2M1466 718.5h1M1467 719.5h1M1468 720.5h1M1469 721.5h1M1470 722.5h1M1471 723.5h1M1472 724.5h1M1473 725.5h1M1474 726.5h1M1475 727.5h1M1476 728.5h1M1477 729.5h1M1478 730.5h1M1479.5 731v2M1480 732.5h1M1481 733.5h1M1482 734.5h1M1483 735.5h1M1484 736.5h1M1485 737.5h1M1486 738.5h1M1487 739.5h1M1488 740.5h1M1489 741.5h1M1490 742.5h1M1491 743.5h1M1492 744.5h1M1493 745.5h1M1494 746.5h1M1495 747.5h1M1496 748.5h2M1498 749.5h1M1499 750.5h1M1500 751.5h1M1501 752.5h1M1502 753.5h1M1503 754.5h1M1504 755.5h1M1505 756.5h2M1507 757.5h1M1508 758.5h1M1509 759.5h1M1510 760.5h1M1511 761.5h1M1512 762.5h1M1513 763.5h2M1515 764.5h1M1516 765.5h1M1517 766.5h1M1518 767.5h1M1519 768.5h1M1520 769.5h2M1522 770.5h1M1523 771.5h1M1524 772.5h1M1525 773.5h1M1526 774.5h2M1528 775.5h1M1529 776.5h1M1530 777.5h1M1531 778.5h1M1532 779.5h2M1534 780.5h1M1535 781.5h1M1536 782.5h1M1537 783.5h1M1538 784.5h2M1540 785.5h1M1541 786.5h1M1542 787.5h1M1543 788.5h1M1544 789.5h2M1546 790.5h1M1547 791.5h1M1548 792.5h1M1549 793.5h1M1550 794.5h2M1552 795.5h1M1553 796.5h1M1554 797.5h1M1555 798.5h1M1556 799.5h1M1557 800.5h2M1559 801.5h1M1560 802.5h1M1561 803.5h1M1562 804.5h1M1563 805.5h1M1564 806.5h1M1565 807.5h1M1566 808.5h1M1567 809.5h1M1568 810.5h1M1569 811.5h1M1570 812.5h1M1571 813.5h1M1572 814.5h1M1573 815.5h1M1574 816.5h1M1575.5 817v2M1576 819.5h1M1577 820.5h1M1578 821.5h1M1579 822.5h1M1580 823.5h1M1581.5 824v2M1582 826.5h1M1583 827.5h1M1584 828.5h1M1585 829.5h1M1586.5 830v2M1587 832.5h1M1588 833.5h1M1589.5 834v2M1590 836.5h1M1591 837.5h1M1592 838.5h1M1593.5 839v2M1594 841.5h1M1595 842.5h1M1596.5 843v2M1597 845.5h1M1598 846.5h1M1599 847.5h1M1600.5 848v2M1601 850.5h1M1602 851.5h1M1603.5 852v2M1604 854.5h1M1605 855.5h1M1606 856.5h1M1607.5 857v2M1608 859.5h1M1609 860.5h1M1610.5 861v2M1611 863.5h1M1612 864.5h1M1613 865.5h1M1614.5 866v2M1615 868.5h1M1616 869.5h1M1617.5 870v2M1618 872.5h1M1619.5 873v2M1620 875.5h1M1621 876.5h14M1635 875.5h3M1638 874.5h3M1641 873.5h2M1643 872.5h4M1647 871.5h3M1650 870.5h4M1654 869.5h28M1682 870.5h4M1686 871.5h4M1690 872.5h4M1694 873.5h3M1697 874.5h4M1701 875.5h3M1704 876.5h3M1707 877.5h3M1710 878.5h2M1712 879.5h3M1715 880.5h2M1717 881.5h3M1720 882.5h2M1722 883.5h3M1725 884.5h2M1727 885.5h3M1730 886.5h2M1732 887.5h3M1735 888.5h2M1737 889.5h2M1739 890.5h3M1742 891.5h2M1744 892.5h3M1747 893.5h2M1749 894.5h2M1751 895.5h3M1754 896.5h2M1756 897.5h2M1758 898.5h2M1760 899.5h3M1763 900.5h2M1765 901.5h2M1767 902.5h2M1769 903.5h2M1771 904.5h2M1773 905.5h2M1775 906.5h2M1777 907.5h2M1779 908.5h2M1781 909.5h2M1783 910.5h2M1785 911.5h2M1787 912.5h2M1789 913.5h2M1791 914.5h2M1793 915.5h1M1794 916.5h2M1796 917.5h2M1798 918.5h2M1800 919.5h1M1801 920.5h2M1803 921.5h2M1805 922.5h1M1806 923.5h2M1808 924.5h2M1810 925.5h2M1812 926.5h2M1814 927.5h1M1815 928.5h2M1817 929.5h2M1819 930.5h2M1821 931.5h1M1822 932.5h2M1824 933.5h2M1826 934.5h2M1828 935.5h2M1830 936.5h1M1831 937.5h2M1833 938.5h2M1835 939.5h2M1837 940.5h1M1838 941.5h2M1840 942.5h2M1842 943.5h1M1843 944.5h2M1845 945.5h2M1847 946.5h1M1848 947.5h2M1850 948.5h2M1852 949.5h1M1853 950.5h2M1855 951.5h2M1857 952.5h1M1858 953.5h2" stroke="#00ffff"/>
</g>
<defs><filter id="bm" x="0" y="0" width="1" height="1" filterUnits="objectBoundingBox" color-interpolation-filters="sRGB"><feComponentTransfer><feFuncA type="discrete" tableValues="0 0 0 1 1"/></feComponentTransfer></filter></defs>
<g filter="url(#bm)">
<text x="57.10" y="158.00" font-size="14" letter-spacing="-0.403" fill="#c0c0c0" text-anchor="end">100dB</text>
<text x="1901.50" y="158.00" font-size="14" letter-spacing="0.000" fill="#c0c0c0" text-anchor="end">70<tspan font-size="13" dy="-1">°</tspan></text>
<text x="56.94" y="230.00" font-size="14" letter-spacing="-0.558" fill="#c0c0c0" text-anchor="end">80dB</text>
<text x="1901.50" y="230.00" font-size="14" letter-spacing="0.000" fill="#c0c0c0" text-anchor="end">0<tspan font-size="13" dy="-1">°</tspan></text>
<text x="56.94" y="303.00" font-size="14" letter-spacing="-0.558" fill="#c0c0c0" text-anchor="end">60dB</text>
<text x="1901.50" y="303.00" font-size="14" letter-spacing="0.000" fill="#c0c0c0" text-anchor="end"><tspan font-weight="normal" font-size="15.5" dy="-0.3">-</tspan><tspan dy="0.3" dx="0.0">70<tspan font-size="13" dy="-1">°</tspan></tspan></text>
<text x="56.94" y="375.00" font-size="14" letter-spacing="-0.558" fill="#c0c0c0" text-anchor="end">40dB</text>
<text x="1901.50" y="375.00" font-size="14" letter-spacing="0.000" fill="#c0c0c0" text-anchor="end"><tspan font-weight="normal" font-size="15.5" dy="-0.3">-</tspan><tspan dy="0.3" dx="0.0">140<tspan font-size="13" dy="-1">°</tspan></tspan></text>
<text x="56.94" y="448.00" font-size="14" letter-spacing="-0.558" fill="#c0c0c0" text-anchor="end">20dB</text>
<text x="1901.50" y="448.00" font-size="14" letter-spacing="0.000" fill="#c0c0c0" text-anchor="end"><tspan font-weight="normal" font-size="15.5" dy="-0.3">-</tspan><tspan dy="0.3" dx="0.0">210<tspan font-size="13" dy="-1">°</tspan></tspan></text>
<text x="56.68" y="520.00" font-size="14" letter-spacing="-0.816" fill="#c0c0c0" text-anchor="end">0dB</text>
<text x="1901.50" y="520.00" font-size="14" letter-spacing="0.000" fill="#c0c0c0" text-anchor="end"><tspan font-weight="normal" font-size="15.5" dy="-0.3">-</tspan><tspan dy="0.3" dx="0.0">280<tspan font-size="13" dy="-1">°</tspan></tspan></text>
<text x="56.94" y="592.00" font-size="14" letter-spacing="-0.558" fill="#c0c0c0" text-anchor="end"><tspan font-weight="normal" font-size="15.5" dy="-0.3">-</tspan><tspan dy="0.3" dx="1.0">20dB</tspan></text>
<text x="1901.50" y="592.00" font-size="14" letter-spacing="0.000" fill="#c0c0c0" text-anchor="end"><tspan font-weight="normal" font-size="15.5" dy="-0.3">-</tspan><tspan dy="0.3" dx="0.0">350<tspan font-size="13" dy="-1">°</tspan></tspan></text>
<text x="56.94" y="665.00" font-size="14" letter-spacing="-0.558" fill="#c0c0c0" text-anchor="end"><tspan font-weight="normal" font-size="15.5" dy="-0.3">-</tspan><tspan dy="0.3" dx="1.0">40dB</tspan></text>
<text x="1901.50" y="665.00" font-size="14" letter-spacing="0.000" fill="#c0c0c0" text-anchor="end"><tspan font-weight="normal" font-size="15.5" dy="-0.3">-</tspan><tspan dy="0.3" dx="0.0">420<tspan font-size="13" dy="-1">°</tspan></tspan></text>
<text x="56.94" y="737.00" font-size="14" letter-spacing="-0.558" fill="#c0c0c0" text-anchor="end"><tspan font-weight="normal" font-size="15.5" dy="-0.3">-</tspan><tspan dy="0.3" dx="1.0">60dB</tspan></text>
<text x="1901.50" y="737.00" font-size="14" letter-spacing="0.000" fill="#c0c0c0" text-anchor="end"><tspan font-weight="normal" font-size="15.5" dy="-0.3">-</tspan><tspan dy="0.3" dx="0.0">490<tspan font-size="13" dy="-1">°</tspan></tspan></text>
<text x="56.94" y="810.00" font-size="14" letter-spacing="-0.558" fill="#c0c0c0" text-anchor="end"><tspan font-weight="normal" font-size="15.5" dy="-0.3">-</tspan><tspan dy="0.3" dx="1.0">80dB</tspan></text>
<text x="1901.50" y="810.00" font-size="14" letter-spacing="0.000" fill="#c0c0c0" text-anchor="end"><tspan font-weight="normal" font-size="15.5" dy="-0.3">-</tspan><tspan dy="0.3" dx="0.0">560<tspan font-size="13" dy="-1">°</tspan></tspan></text>
<text x="57.10" y="882.00" font-size="14" letter-spacing="-0.403" fill="#c0c0c0" text-anchor="end"><tspan font-weight="normal" font-size="15.5" dy="-0.3">-</tspan><tspan dy="0.3" dx="1.0">100dB</tspan></text>
<text x="1901.50" y="882.00" font-size="14" letter-spacing="0.000" fill="#c0c0c0" text-anchor="end"><tspan font-weight="normal" font-size="15.5" dy="-0.3">-</tspan><tspan dy="0.3" dx="0.0">630<tspan font-size="13" dy="-1">°</tspan></tspan></text>
<text x="57.10" y="955.00" font-size="14" letter-spacing="-0.403" fill="#c0c0c0" text-anchor="end"><tspan font-weight="normal" font-size="15.5" dy="-0.3">-</tspan><tspan dy="0.3" dx="1.0">120dB</tspan></text>
<text x="1901.50" y="955.00" font-size="14" letter-spacing="0.000" fill="#c0c0c0" text-anchor="end"><tspan font-weight="normal" font-size="15.5" dy="-0.3">-</tspan><tspan dy="0.3" dx="0.0">700<tspan font-size="13" dy="-1">°</tspan></tspan></text>
<text x="57.10" y="1027.00" font-size="14" letter-spacing="-0.403" fill="#c0c0c0" text-anchor="end"><tspan font-weight="normal" font-size="15.5" dy="-0.3">-</tspan><tspan dy="0.3" dx="1.0">140dB</tspan></text>
<text x="1901.50" y="1027.00" font-size="14" letter-spacing="0.000" fill="#c0c0c0" text-anchor="end"><tspan font-weight="normal" font-size="15.5" dy="-0.3">-</tspan><tspan dy="0.3" dx="0.0">770<tspan font-size="13" dy="-1">°</tspan></tspan></text>
<text x="229.28" y="1043.00" font-size="14" letter-spacing="0.000" fill="#c0c0c0" text-anchor="middle">100Hz</text>
<text x="462.17" y="1043.00" font-size="14" letter-spacing="0.000" fill="#c0c0c0" text-anchor="middle">1KHz</text>
<text x="695.06" y="1043.00" font-size="14" letter-spacing="0.000" fill="#c0c0c0" text-anchor="middle">10KHz</text>
<text x="927.95" y="1043.00" font-size="14" letter-spacing="0.000" fill="#c0c0c0" text-anchor="middle">100KHz</text>
<text x="1160.84" y="1043.00" font-size="14" letter-spacing="0.000" fill="#c0c0c0" text-anchor="middle">1MHz</text>
<text x="1393.72" y="1043.00" font-size="14" letter-spacing="0.000" fill="#c0c0c0" text-anchor="middle">10MHz</text>
<text x="1626.61" y="1043.00" font-size="14" letter-spacing="0.000" fill="#c0c0c0" text-anchor="middle">100MHz</text>
<text x="1859.50" y="1043.00" font-size="14" letter-spacing="0.000" fill="#c0c0c0" text-anchor="middle">1GHz</text>
<text x="320.50" y="148.00" font-size="14" letter-spacing="-0.239" fill="#00ff00" text-anchor="start">-1/(1-1/(2*(I(Vi)@1*V(x)@2-V(x)@1*I(Vi)@2)+V(x)@1+I(Vi)@2))</text>
<text x="1192.50" y="148.00" font-size="14" letter-spacing="-0.197" fill="#00ffff" text-anchor="start">-1/(1-1/(2*(I(Vi1)@1*V(x1)@2-V(x1)@1*I(Vi1)@2)+V(x1)@1+I(Vi1)@2))</text>
</g>
</svg>
<div class="a" style="left:0;top:1060px;width:1920px;height:20px;background:#f0f0f0"></div>
<div class="a" style="left:0;top:1061px;width:1920px;height:1px;background:#d7d7d7"></div>
<div class="t" style="left:2.00px;top:1064.84px;font-size:12px;line-height:14px;letter-spacing:-0.520px;word-spacing:0.520px;color:#000;">x = 626.250KHz</div>
<div class="t" style="left:94.50px;top:1064.84px;font-size:12px;line-height:14px;letter-spacing:-0.394px;word-spacing:0.394px;color:#000;">y = -65.432dB, -509.010°</div>
<div class="t" style="left:1868.00px;top:1064.84px;font-size:12px;line-height:14px;letter-spacing:-0.003px;word-spacing:0.003px;color:#000;">Alternate</div>
</body></html>
